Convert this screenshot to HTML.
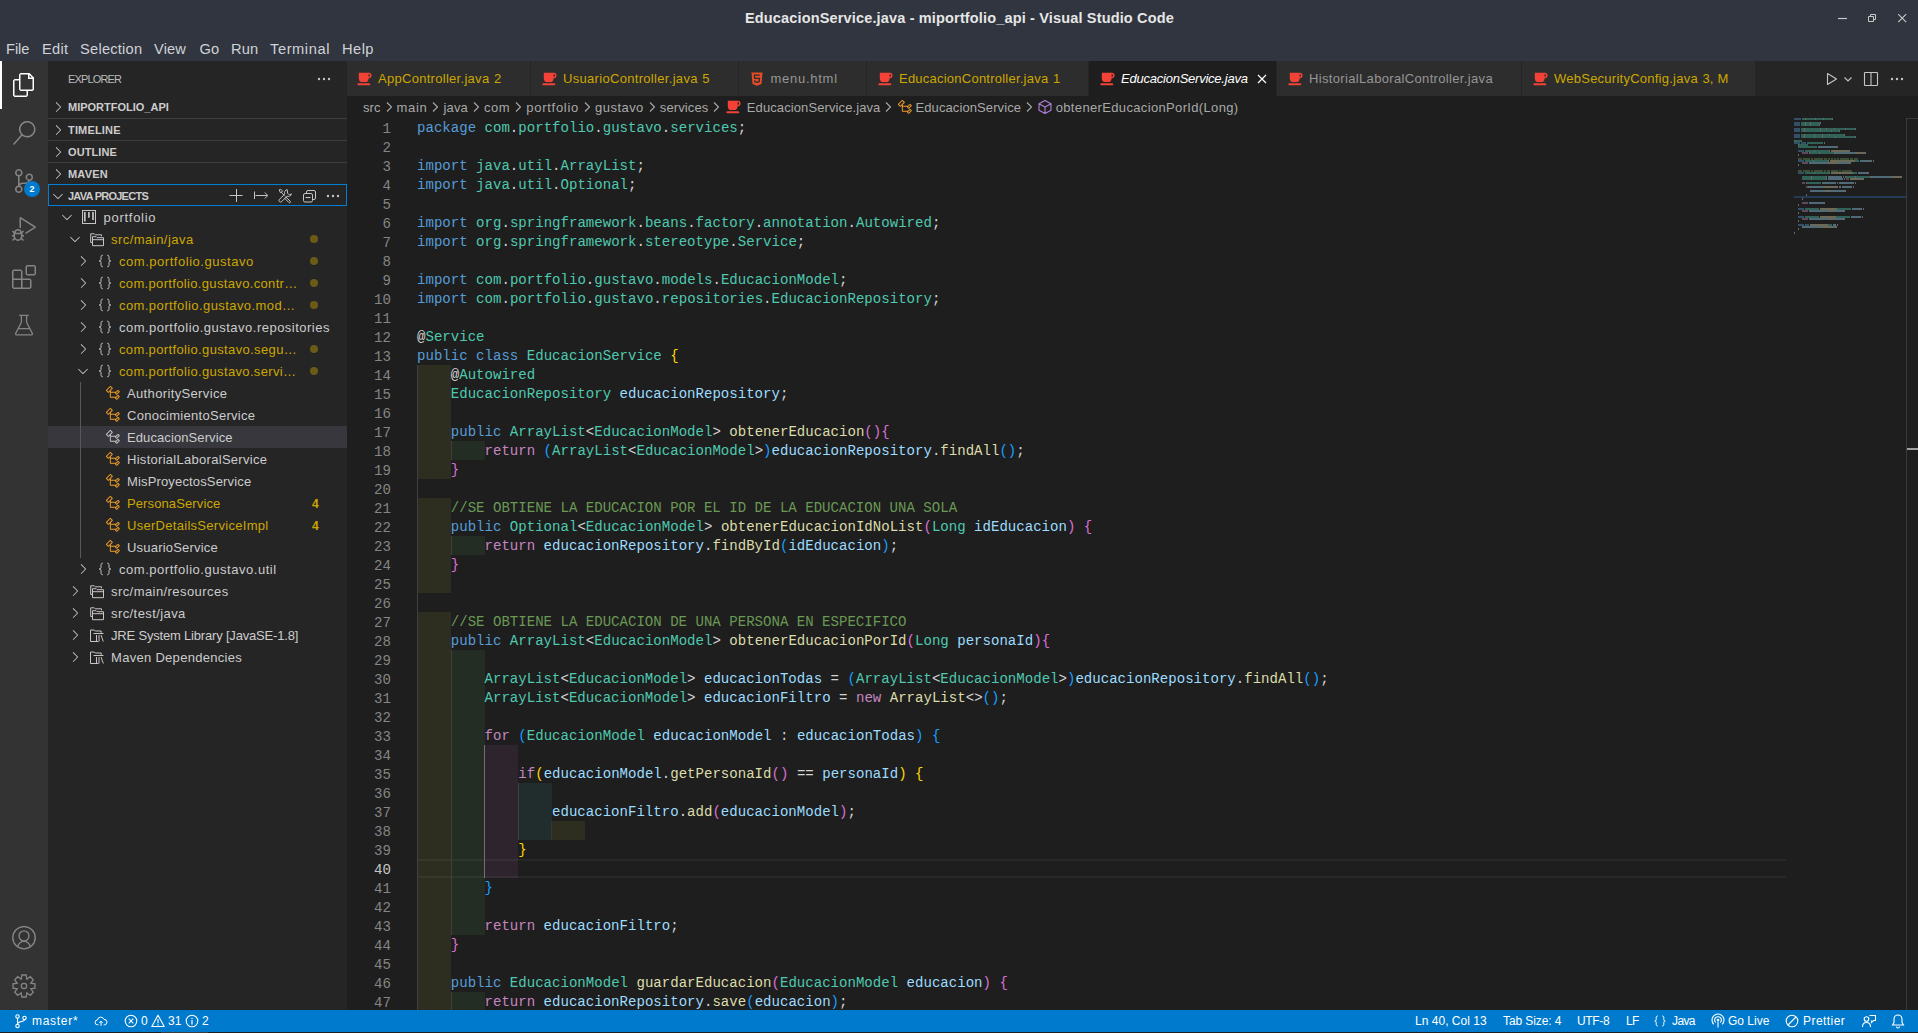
<!DOCTYPE html><html><head><meta charset="utf-8"><title>VS Code</title><style>
*{margin:0;padding:0;box-sizing:border-box}
html,body{width:1918px;height:1033px;overflow:hidden;background:#1e1e1e}
body{position:relative;font-family:"Liberation Sans",sans-serif;color:#cccccc}
.a{position:absolute}
.nw{white-space:pre}
.code{font-family:"Liberation Mono",monospace;font-size:14.07px;line-height:19px;white-space:pre}
</style></head><body><div class="a" style="left:0px;top:0px;width:1918px;height:61px;background:#31353f;"></div><div class="a nw" style="left:745px;top:6.98px;font-size:14.5px;line-height:22px;color:#e6e6e6;font-weight:bold;"><span style="letter-spacing:0.157px">EducacionService.java - miportfolio_api - Visual Studio Code</span></div><svg class="a" style="left:1836px;top:12px;" width="12" height="12" viewBox="0 0 12 12"><path d="M2 6.5h9" stroke="#c8c8c8" stroke-width="1.2"/></svg><svg class="a" style="left:1866px;top:12px;" width="12" height="12" viewBox="0 0 12 12"><path d="M2.5 4.5h5v5h-5z M4.5 4.5v-2h5v5h-2" fill="none" stroke="#c8c8c8" stroke-width="1"/></svg><svg class="a" style="left:1896px;top:12px;" width="12" height="12" viewBox="0 0 12 12"><path d="M2.2 2.2l8 8M10.2 2.2l-8 8" stroke="#c8c8c8" stroke-width="1.1"/></svg><div class="a nw" style="left:6px;top:37.92px;font-size:14.67px;line-height:22px;color:#cfd2d6;"><span style="letter-spacing:-0.043px">File</span></div><div class="a nw" style="left:42px;top:37.92px;font-size:14.67px;line-height:22px;color:#cfd2d6;"><span style="letter-spacing:0.246px">Edit</span></div><div class="a nw" style="left:80px;top:37.92px;font-size:14.67px;line-height:22px;color:#cfd2d6;"><span style="letter-spacing:0.231px">Selection</span></div><div class="a nw" style="left:154px;top:37.92px;font-size:14.67px;line-height:22px;color:#cfd2d6;"><span style="letter-spacing:0.141px">View</span></div><div class="a nw" style="left:199.5px;top:37.92px;font-size:14.67px;line-height:22px;color:#cfd2d6;"><span style="letter-spacing:-0.016px">Go</span></div><div class="a nw" style="left:231px;top:37.92px;font-size:14.67px;line-height:22px;color:#cfd2d6;"><span style="letter-spacing:0.115px">Run</span></div><div class="a nw" style="left:270px;top:37.92px;font-size:14.67px;line-height:22px;color:#cfd2d6;"><span style="letter-spacing:0.576px">Terminal</span></div><div class="a nw" style="left:342px;top:37.92px;font-size:14.67px;line-height:22px;color:#cfd2d6;"><span style="letter-spacing:0.445px">Help</span></div><div class="a" style="left:0px;top:61px;width:48px;height:949px;background:#333333;"></div><div class="a" style="left:0px;top:61px;width:2px;height:48px;background:#ffffff;"></div><svg class="a" style="left:12px;top:73px;" width="24" height="24" viewBox="0 0 24 24"><path fill="#ffffff" d="M17.5 0h-9L7 1.5V6H2.5L1 7.5v15.07L2.5 24h12.07L16 22.57V18h4.7l1.3-1.43V4.5L17.5 0zm0 2.12l2.38 2.38H17.5V2.12zm-3 20.38h-12v-15H7v9.07L8.5 18h6v4.5zm6-6h-12v-15H16V6h4.5v10.5z"/></svg><svg class="a" style="left:12px;top:121px;" width="24" height="24" viewBox="0 0 24 24"><path fill="#858585" d="M15.25 0a8.25 8.25 0 0 0-6.18 13.72L1 22.88l1.12 1 8.05-9.12A8.251 8.251 0 1 0 15.25.01V0zm0 15a6.75 6.75 0 1 1 0-13.5 6.75 6.75 0 0 1 0 13.5z"/></svg><svg class="a" style="left:12px;top:169px;" width="24" height="24" viewBox="0 0 24 24"><path fill="#858585" d="M21.007 8.222A3.738 3.738 0 0 0 15.045 5.2a3.737 3.737 0 0 0 1.156 6.583 2.988 2.988 0 0 1-2.668 1.67h-2.99a4.456 4.456 0 0 0-2.989 1.165V7.4a3.737 3.737 0 1 0-1.494 0v9.117a3.776 3.776 0 1 0 1.816.099 2.99 2.99 0 0 1 2.668-1.667h2.99a4.484 4.484 0 0 0 4.223-3.039 3.736 3.736 0 0 0 3.25-3.687zM4.565 3.738a2.242 2.242 0 1 1 4.484 0 2.242 2.242 0 0 1-4.484 0zm4.484 16.441a2.242 2.242 0 1 1-4.484 0 2.242 2.242 0 0 1 4.484 0zm8.221-9.715a2.242 2.242 0 1 1 0-4.485 2.242 2.242 0 0 1 0 4.485z"/></svg><svg class="a" style="left:24px;top:181px;" width="16" height="16" viewBox="0 0 16 16"><circle cx="8" cy="8" r="8" fill="#007acc"/></svg><div class="a" style="left:24px;top:181px;width:16px;height:16px;text-align:center;font-size:9px;line-height:16px;font-weight:bold;color:#fff">2</div><svg class="a" style="left:12px;top:217px;" width="24" height="24" viewBox="0 0 24 24"><path fill="#858585" d="M10.94 13.5l-1.32 1.32a3.73 3.73 0 0 0-7.24 0L1.06 13.5 0 14.56l1.72 1.72-.22.22V18H0v1.5h1.5v.08c.077.489.214.966.41 1.42L0 22.94 1.06 24l1.65-1.65A4.308 4.308 0 0 0 6 24a4.31 4.31 0 0 0 3.29-1.65L10.94 24 12 22.94 10.09 21c.198-.464.336-.951.41-1.45v-.1H12V18h-1.5v-1.5l-.22-.22L12 14.56l-1.06-1.06zM6 13.5a2.25 2.25 0 0 1 2.25 2.25h-4.5A2.25 2.25 0 0 1 6 13.5zm3 6a3.33 3.33 0 0 1-3 3 3.33 3.33 0 0 1-3-3v-2.25h6v2.25zm14.76-9.9v1.26L13.5 17.37V15.6l8.5-5.37L9 2v9.46a5.07 5.07 0 0 0-1.5-.72V.63L8.64 0l15.12 9.6z"/></svg><svg class="a" style="left:12px;top:265px;" width="24" height="24" viewBox="0 0 24 24"><path fill="#858585" d="M13.5 1.5L15 0h7.5L24 1.5V9l-1.5 1.5H15L13.5 9V1.5zm1.5 0V9h7.5V1.5H15zM0 15V6l1.5-1.5H9L10.5 6v7.5H18l1.5 1.5v7.5L18 24H1.5L0 22.5V15zm9-1.5V6H1.5v7.5H9zM9 15H1.5v7.5H9V15zm1.5 7.5H18V15h-7.5v7.5z"/></svg><svg class="a" style="left:12px;top:313px;" width="24" height="24" viewBox="0 0 24 24"><path d="M7.2 2.4h9.6M9.4 2.4v6.8L3.6 20.6a.9.9 0 0 0 .8 1.3h15.2a.9.9 0 0 0 .8-1.3L14.6 9.2V2.4M6.6 15.6h10.8" fill="none" stroke="#858585" stroke-width="1.3" stroke-linejoin="round"/></svg><svg class="a" style="left:12px;top:926px;" width="24" height="24" viewBox="0 0 24 24"><circle cx="12" cy="11.7" r="11.2" fill="none" stroke="#858585" stroke-width="1.4"/><circle cx="12" cy="9.9" r="5" fill="none" stroke="#858585" stroke-width="1.4"/><path d="M5.6 20.6c1.1-3.3 3.5-5.2 6.4-5.2s5.3 1.9 6.4 5.2" fill="none" stroke="#858585" stroke-width="1.4"/></svg><svg class="a" style="left:12px;top:974px;" width="24" height="24" viewBox="0 0 24 24"><path d="M9.17 5.16 L9.86 1.01 L14.14 1.01 L14.83 5.16 L18.26 2.71 L21.29 5.74 L18.84 9.17 L22.99 9.86 L22.99 14.14 L18.84 14.83 L21.29 18.26 L18.26 21.29 L14.83 18.84 L14.14 22.99 L9.86 22.99 L9.17 18.84 L5.74 21.29 L2.71 18.26 L5.16 14.83 L1.01 14.14 L1.01 9.86 L5.16 9.17 L2.71 5.74 L5.74 2.71Z" fill="none" stroke="#858585" stroke-width="1.3" stroke-linejoin="miter"/><circle cx="12" cy="12" r="2.7" fill="none" stroke="#858585" stroke-width="1.2"/></svg><div class="a" style="left:48px;top:61px;width:299px;height:949px;background:#252526;"></div><div class="a nw" style="left:68px;top:71.19px;font-size:11px;line-height:16px;color:#bbbbbb;"><span style="letter-spacing:-0.848px">EXPLORER</span></div><svg class="a" style="left:316px;top:71px;" width="16" height="16" viewBox="0 0 16 16"><circle cx="3" cy="8" r="1.2" fill="#c5c5c5"/><circle cx="8" cy="8" r="1.2" fill="#c5c5c5"/><circle cx="13" cy="8" r="1.2" fill="#c5c5c5"/></svg><svg class="a" style="left:50px;top:99px;" width="16" height="16" viewBox="0 0 16 16"><path fill="#c5c5c5" d="M10.072 8.024L5.715 3.667l.618-.62L11 7.716v.618L6.333 13l-.618-.619 4.357-4.357z"/></svg><div class="a nw" style="left:68px;top:99.19px;font-size:11px;line-height:16px;color:#cccccc;font-weight:bold;"><span style="letter-spacing:-0.001px">MIPORTFOLIO_API</span></div><div class="a" style="left:48px;top:118px;width:299px;height:1px;background:#3c3c3c;"></div><svg class="a" style="left:50px;top:122px;" width="16" height="16" viewBox="0 0 16 16"><path fill="#c5c5c5" d="M10.072 8.024L5.715 3.667l.618-.62L11 7.716v.618L6.333 13l-.618-.619 4.357-4.357z"/></svg><div class="a nw" style="left:68px;top:122.19px;font-size:11px;line-height:16px;color:#cccccc;font-weight:bold;"><span style="letter-spacing:0.168px">TIMELINE</span></div><div class="a" style="left:48px;top:140px;width:299px;height:1px;background:#3c3c3c;"></div><svg class="a" style="left:50px;top:144px;" width="16" height="16" viewBox="0 0 16 16"><path fill="#c5c5c5" d="M10.072 8.024L5.715 3.667l.618-.62L11 7.716v.618L6.333 13l-.618-.619 4.357-4.357z"/></svg><div class="a nw" style="left:68px;top:144.19px;font-size:11px;line-height:16px;color:#cccccc;font-weight:bold;"><span style="letter-spacing:0.087px">OUTLINE</span></div><div class="a" style="left:48px;top:162px;width:299px;height:1px;background:#3c3c3c;"></div><svg class="a" style="left:50px;top:166px;" width="16" height="16" viewBox="0 0 16 16"><path fill="#c5c5c5" d="M10.072 8.024L5.715 3.667l.618-.62L11 7.716v.618L6.333 13l-.618-.619 4.357-4.357z"/></svg><div class="a nw" style="left:68px;top:166.19px;font-size:11px;line-height:16px;color:#cccccc;font-weight:bold;"><span style="letter-spacing:0.178px">MAVEN</span></div><div class="a" style="left:48px;top:184px;width:299px;height:22px;border:1px solid #007fd4"></div><svg class="a" style="left:50px;top:188px;" width="16" height="16" viewBox="0 0 16 16"><path fill="#c5c5c5" d="M7.976 10.072l4.357-4.357.62.618L8.284 11h-.618L3 6.333l.619-.618 4.357 4.357z"/></svg><div class="a nw" style="left:68px;top:188.19px;font-size:11px;line-height:16px;color:#cccccc;font-weight:bold;"><span style="letter-spacing:-0.744px">JAVA PROJECTS</span></div><svg class="a" style="left:229px;top:188px;" width="16" height="16" viewBox="0 0 16 16"><path d="M7.5 1v13M0.5 7.5h13" stroke="#c5c5c5" stroke-width="1"/></svg><svg class="a" style="left:252px;top:188px;" width="16" height="16" viewBox="0 0 16 16"><path d="M2.5 3.5v7.5M3.5 7.5h12M12.8 4.5l3 3-3 3" fill="none" stroke="#c5c5c5" stroke-width="1"/></svg><svg class="a" style="left:277px;top:188px;" width="16" height="16" viewBox="0 0 16 16"><path d="M2.2 1.8l1.6-.5 1.5 1.5-.5 1.6-1.5.1zM4.2 4.3l3.4 3.4M8.6 8.6l4.6 4.6a.9.9 0 0 1-1.3 1.3L7.3 9.9" fill="none" stroke="#c5c5c5" stroke-width="1"/><path d="M10.2 1.6a3.2 3.2 0 0 0-2.4 4.4L2.2 11.6a1.6 1.6 0 0 0 2.2 2.2l5.6-5.6a3.2 3.2 0 0 0 4.4-2.4l-2 1.2-1.8-1.8z" fill="none" stroke="#c5c5c5" stroke-width="1" stroke-linejoin="round"/></svg><svg class="a" style="left:302px;top:188px;" width="16" height="16" viewBox="0 0 16 16"><rect x="4.5" y="2.5" width="9" height="9" rx="1.5" fill="none" stroke="#c5c5c5" stroke-width="1"/><rect x="1.5" y="5.5" width="9" height="8.5" rx="1.5" fill="#252526" stroke="#c5c5c5" stroke-width="1"/><path d="M3.5 9.5h5" stroke="#c5c5c5" stroke-width="1.1"/></svg><svg class="a" style="left:325px;top:188px;" width="16" height="16" viewBox="0 0 16 16"><circle cx="3" cy="8" r="1.2" fill="#c5c5c5"/><circle cx="8" cy="8" r="1.2" fill="#c5c5c5"/><circle cx="13" cy="8" r="1.2" fill="#c5c5c5"/></svg><svg class="a" style="left:59px;top:209px;" width="16" height="16" viewBox="0 0 16 16"><path fill="#c5c5c5" d="M7.976 10.072l4.357-4.357.62.618L8.284 11h-.618L3 6.333l.619-.618 4.357 4.357z"/></svg><svg class="a" style="left:81px;top:209px;" width="16" height="16" viewBox="0 0 16 16"><rect x="1.5" y="1.5" width="13" height="13" fill="none" stroke="#c5c5c5" stroke-width="1"/><path d="M3.8 3v9.5M7.9 3v5.8M12 3v8" stroke="#c5c5c5" stroke-width="1.7"/></svg><div class="a nw" style="left:103.5px;top:208.10px;font-size:13px;line-height:20px;color:#cccccc;"><span style="letter-spacing:0.729px">portfolio</span></div><svg class="a" style="left:67px;top:231px;" width="16" height="16" viewBox="0 0 16 16"><path fill="#c5c5c5" d="M7.976 10.072l4.357-4.357.62.618L8.284 11h-.618L3 6.333l.619-.618 4.357 4.357z"/></svg><svg class="a" style="left:89px;top:231px;" width="16" height="16" viewBox="0 0 16 16"><path d="M3 11.5H1.7V2.8h3.6l1 1h6.2v1.5" fill="none" stroke="#c5c5c5" stroke-width="1"/><path d="M3.5 5.7h3.7l1 1h6.3v8H3.5z M3.5 8.7h11" fill="none" stroke="#c5c5c5" stroke-width="1"/></svg><div class="a nw" style="left:111px;top:230.10px;font-size:13px;line-height:20px;color:#cca700;"><span style="letter-spacing:0.468px">src/main/java</span></div><svg class="a" style="left:310px;top:235px;" width="8" height="8" viewBox="0 0 8 8"><circle cx="4" cy="4" r="4" fill="rgba(204,167,0,0.42)"/></svg><svg class="a" style="left:75px;top:253px;" width="16" height="16" viewBox="0 0 16 16"><path fill="#c5c5c5" d="M10.072 8.024L5.715 3.667l.618-.62L11 7.716v.618L6.333 13l-.618-.619 4.357-4.357z"/></svg><svg class="a" style="left:97px;top:253px;" width="16" height="16" viewBox="0 0 16 16"><path d="M5.8 2.2C4.4 2.2 4 2.9 4 4.2v2.2C4 7.4 3.5 8 2.2 8 3.5 8 4 8.6 4 9.6v2.2c0 1.3.4 2 1.8 2M10.2 2.2c1.4 0 1.8.7 1.8 2v2.2c0 1 .5 1.6 1.8 1.6-1.3 0-1.8.6-1.8 1.6v2.2c0 1.3-.4 2-1.8 2" fill="none" stroke="#c5c5c5" stroke-width="1"/></svg><div class="a nw" style="left:119px;top:252.10px;font-size:13px;line-height:20px;color:#cca700;"><span style="letter-spacing:0.532px">com.portfolio.gustavo</span></div><svg class="a" style="left:310px;top:257px;" width="8" height="8" viewBox="0 0 8 8"><circle cx="4" cy="4" r="4" fill="rgba(204,167,0,0.42)"/></svg><svg class="a" style="left:75px;top:275px;" width="16" height="16" viewBox="0 0 16 16"><path fill="#c5c5c5" d="M10.072 8.024L5.715 3.667l.618-.62L11 7.716v.618L6.333 13l-.618-.619 4.357-4.357z"/></svg><svg class="a" style="left:97px;top:275px;" width="16" height="16" viewBox="0 0 16 16"><path d="M5.8 2.2C4.4 2.2 4 2.9 4 4.2v2.2C4 7.4 3.5 8 2.2 8 3.5 8 4 8.6 4 9.6v2.2c0 1.3.4 2 1.8 2M10.2 2.2c1.4 0 1.8.7 1.8 2v2.2c0 1 .5 1.6 1.8 1.6-1.3 0-1.8.6-1.8 1.6v2.2c0 1.3-.4 2-1.8 2" fill="none" stroke="#c5c5c5" stroke-width="1"/></svg><div class="a nw" style="left:119px;top:274.10px;font-size:13px;line-height:20px;color:#cca700;"><span style="letter-spacing:0.340px">com.portfolio.gustavo.contr…</span></div><svg class="a" style="left:310px;top:279px;" width="8" height="8" viewBox="0 0 8 8"><circle cx="4" cy="4" r="4" fill="rgba(204,167,0,0.42)"/></svg><svg class="a" style="left:75px;top:297px;" width="16" height="16" viewBox="0 0 16 16"><path fill="#c5c5c5" d="M10.072 8.024L5.715 3.667l.618-.62L11 7.716v.618L6.333 13l-.618-.619 4.357-4.357z"/></svg><svg class="a" style="left:97px;top:297px;" width="16" height="16" viewBox="0 0 16 16"><path d="M5.8 2.2C4.4 2.2 4 2.9 4 4.2v2.2C4 7.4 3.5 8 2.2 8 3.5 8 4 8.6 4 9.6v2.2c0 1.3.4 2 1.8 2M10.2 2.2c1.4 0 1.8.7 1.8 2v2.2c0 1 .5 1.6 1.8 1.6-1.3 0-1.8.6-1.8 1.6v2.2c0 1.3-.4 2-1.8 2" fill="none" stroke="#c5c5c5" stroke-width="1"/></svg><div class="a nw" style="left:119px;top:296.10px;font-size:13px;line-height:20px;color:#cca700;"><span style="letter-spacing:0.425px">com.portfolio.gustavo.mod…</span></div><svg class="a" style="left:310px;top:301px;" width="8" height="8" viewBox="0 0 8 8"><circle cx="4" cy="4" r="4" fill="rgba(204,167,0,0.42)"/></svg><svg class="a" style="left:75px;top:319px;" width="16" height="16" viewBox="0 0 16 16"><path fill="#c5c5c5" d="M10.072 8.024L5.715 3.667l.618-.62L11 7.716v.618L6.333 13l-.618-.619 4.357-4.357z"/></svg><svg class="a" style="left:97px;top:319px;" width="16" height="16" viewBox="0 0 16 16"><path d="M5.8 2.2C4.4 2.2 4 2.9 4 4.2v2.2C4 7.4 3.5 8 2.2 8 3.5 8 4 8.6 4 9.6v2.2c0 1.3.4 2 1.8 2M10.2 2.2c1.4 0 1.8.7 1.8 2v2.2c0 1 .5 1.6 1.8 1.6-1.3 0-1.8.6-1.8 1.6v2.2c0 1.3-.4 2-1.8 2" fill="none" stroke="#c5c5c5" stroke-width="1"/></svg><div class="a nw" style="left:119px;top:318.10px;font-size:13px;line-height:20px;color:#cccccc;"><span style="letter-spacing:0.487px">com.portfolio.gustavo.repositories</span></div><svg class="a" style="left:75px;top:341px;" width="16" height="16" viewBox="0 0 16 16"><path fill="#c5c5c5" d="M10.072 8.024L5.715 3.667l.618-.62L11 7.716v.618L6.333 13l-.618-.619 4.357-4.357z"/></svg><svg class="a" style="left:97px;top:341px;" width="16" height="16" viewBox="0 0 16 16"><path d="M5.8 2.2C4.4 2.2 4 2.9 4 4.2v2.2C4 7.4 3.5 8 2.2 8 3.5 8 4 8.6 4 9.6v2.2c0 1.3.4 2 1.8 2M10.2 2.2c1.4 0 1.8.7 1.8 2v2.2c0 1 .5 1.6 1.8 1.6-1.3 0-1.8.6-1.8 1.6v2.2c0 1.3-.4 2-1.8 2" fill="none" stroke="#c5c5c5" stroke-width="1"/></svg><div class="a nw" style="left:119px;top:340.10px;font-size:13px;line-height:20px;color:#cca700;"><span style="letter-spacing:0.360px">com.portfolio.gustavo.segu…</span></div><svg class="a" style="left:310px;top:345px;" width="8" height="8" viewBox="0 0 8 8"><circle cx="4" cy="4" r="4" fill="rgba(204,167,0,0.42)"/></svg><svg class="a" style="left:75px;top:363px;" width="16" height="16" viewBox="0 0 16 16"><path fill="#c5c5c5" d="M7.976 10.072l4.357-4.357.62.618L8.284 11h-.618L3 6.333l.619-.618 4.357 4.357z"/></svg><svg class="a" style="left:97px;top:363px;" width="16" height="16" viewBox="0 0 16 16"><path d="M5.8 2.2C4.4 2.2 4 2.9 4 4.2v2.2C4 7.4 3.5 8 2.2 8 3.5 8 4 8.6 4 9.6v2.2c0 1.3.4 2 1.8 2M10.2 2.2c1.4 0 1.8.7 1.8 2v2.2c0 1 .5 1.6 1.8 1.6-1.3 0-1.8.6-1.8 1.6v2.2c0 1.3-.4 2-1.8 2" fill="none" stroke="#c5c5c5" stroke-width="1"/></svg><div class="a nw" style="left:119px;top:362.10px;font-size:13px;line-height:20px;color:#cca700;"><span style="letter-spacing:0.349px">com.portfolio.gustavo.servi…</span></div><svg class="a" style="left:310px;top:367px;" width="8" height="8" viewBox="0 0 8 8"><circle cx="4" cy="4" r="4" fill="rgba(204,167,0,0.42)"/></svg><svg class="a" style="left:105px;top:385px;" width="16" height="16" viewBox="0 0 16 16"><path fill="#ee9d28" d="M11.34 9.71h.71l2.67-2.67v-.71L13.38 5h-.7l-1.82 1.81h-5V5.56l1.86-1.85V3l-2-2H5L1 5v.71l2 2h.71l1.14-1.15v5.79l.5.5H10v.52l1.33 1.34h.71l2.67-2.67v-.71L13.37 10h-.7l-1.86 1.85h-5v-4H10v.48l1.34 1.38zm1.69-3.65l.63.63-2 2-.63-.63 2-2zm0 5l.63.63-2 2-.63-.63 2-2zM3.35 6.65L2.06 5.36l3.29-3.29 1.29 1.29-3.29 3.29z"/></svg><div class="a nw" style="left:127px;top:384.10px;font-size:13px;line-height:20px;color:#cccccc;"><span style="letter-spacing:0.354px">AuthorityService</span></div><svg class="a" style="left:105px;top:407px;" width="16" height="16" viewBox="0 0 16 16"><path fill="#ee9d28" d="M11.34 9.71h.71l2.67-2.67v-.71L13.38 5h-.7l-1.82 1.81h-5V5.56l1.86-1.85V3l-2-2H5L1 5v.71l2 2h.71l1.14-1.15v5.79l.5.5H10v.52l1.33 1.34h.71l2.67-2.67v-.71L13.37 10h-.7l-1.86 1.85h-5v-4H10v.48l1.34 1.38zm1.69-3.65l.63.63-2 2-.63-.63 2-2zm0 5l.63.63-2 2-.63-.63 2-2zM3.35 6.65L2.06 5.36l3.29-3.29 1.29 1.29-3.29 3.29z"/></svg><div class="a nw" style="left:127px;top:406.10px;font-size:13px;line-height:20px;color:#cccccc;"><span style="letter-spacing:0.289px">ConocimientoService</span></div><div class="a" style="left:48px;top:426px;width:299px;height:22px;background:#37373d;"></div><svg class="a" style="left:105px;top:429px;" width="16" height="16" viewBox="0 0 16 16"><path fill="#c5c5c5" d="M11.34 9.71h.71l2.67-2.67v-.71L13.38 5h-.7l-1.82 1.81h-5V5.56l1.86-1.85V3l-2-2H5L1 5v.71l2 2h.71l1.14-1.15v5.79l.5.5H10v.52l1.33 1.34h.71l2.67-2.67v-.71L13.37 10h-.7l-1.86 1.85h-5v-4H10v.48l1.34 1.38zm1.69-3.65l.63.63-2 2-.63-.63 2-2zm0 5l.63.63-2 2-.63-.63 2-2zM3.35 6.65L2.06 5.36l3.29-3.29 1.29 1.29-3.29 3.29z"/></svg><div class="a nw" style="left:127px;top:428.10px;font-size:13px;line-height:20px;color:#cccccc;"><span style="letter-spacing:0.098px">EducacionService</span></div><svg class="a" style="left:105px;top:451px;" width="16" height="16" viewBox="0 0 16 16"><path fill="#ee9d28" d="M11.34 9.71h.71l2.67-2.67v-.71L13.38 5h-.7l-1.82 1.81h-5V5.56l1.86-1.85V3l-2-2H5L1 5v.71l2 2h.71l1.14-1.15v5.79l.5.5H10v.52l1.33 1.34h.71l2.67-2.67v-.71L13.37 10h-.7l-1.86 1.85h-5v-4H10v.48l1.34 1.38zm1.69-3.65l.63.63-2 2-.63-.63 2-2zm0 5l.63.63-2 2-.63-.63 2-2zM3.35 6.65L2.06 5.36l3.29-3.29 1.29 1.29-3.29 3.29z"/></svg><div class="a nw" style="left:127px;top:450.10px;font-size:13px;line-height:20px;color:#cccccc;"><span style="letter-spacing:0.285px">HistorialLaboralService</span></div><svg class="a" style="left:105px;top:473px;" width="16" height="16" viewBox="0 0 16 16"><path fill="#ee9d28" d="M11.34 9.71h.71l2.67-2.67v-.71L13.38 5h-.7l-1.82 1.81h-5V5.56l1.86-1.85V3l-2-2H5L1 5v.71l2 2h.71l1.14-1.15v5.79l.5.5H10v.52l1.33 1.34h.71l2.67-2.67v-.71L13.37 10h-.7l-1.86 1.85h-5v-4H10v.48l1.34 1.38zm1.69-3.65l.63.63-2 2-.63-.63 2-2zm0 5l.63.63-2 2-.63-.63 2-2zM3.35 6.65L2.06 5.36l3.29-3.29 1.29 1.29-3.29 3.29z"/></svg><div class="a nw" style="left:127px;top:472.10px;font-size:13px;line-height:20px;color:#cccccc;"><span style="letter-spacing:0.153px">MisProyectosService</span></div><svg class="a" style="left:105px;top:495px;" width="16" height="16" viewBox="0 0 16 16"><path fill="#ee9d28" d="M11.34 9.71h.71l2.67-2.67v-.71L13.38 5h-.7l-1.82 1.81h-5V5.56l1.86-1.85V3l-2-2H5L1 5v.71l2 2h.71l1.14-1.15v5.79l.5.5H10v.52l1.33 1.34h.71l2.67-2.67v-.71L13.37 10h-.7l-1.86 1.85h-5v-4H10v.48l1.34 1.38zm1.69-3.65l.63.63-2 2-.63-.63 2-2zm0 5l.63.63-2 2-.63-.63 2-2zM3.35 6.65L2.06 5.36l3.29-3.29 1.29 1.29-3.29 3.29z"/></svg><div class="a nw" style="left:127px;top:494.10px;font-size:13px;line-height:20px;color:#cca700;"><span style="letter-spacing:0.112px">PersonaService</span></div><div class="a nw" style="left:312px;top:495.44px;font-size:12px;line-height:18px;color:#cca700;font-weight:bold;"><span style="letter-spacing:0.188px">4</span></div><svg class="a" style="left:105px;top:517px;" width="16" height="16" viewBox="0 0 16 16"><path fill="#ee9d28" d="M11.34 9.71h.71l2.67-2.67v-.71L13.38 5h-.7l-1.82 1.81h-5V5.56l1.86-1.85V3l-2-2H5L1 5v.71l2 2h.71l1.14-1.15v5.79l.5.5H10v.52l1.33 1.34h.71l2.67-2.67v-.71L13.37 10h-.7l-1.86 1.85h-5v-4H10v.48l1.34 1.38zm1.69-3.65l.63.63-2 2-.63-.63 2-2zm0 5l.63.63-2 2-.63-.63 2-2zM3.35 6.65L2.06 5.36l3.29-3.29 1.29 1.29-3.29 3.29z"/></svg><div class="a nw" style="left:127px;top:516.10px;font-size:13px;line-height:20px;color:#cca700;"><span style="letter-spacing:0.289px">UserDetailsServiceImpl</span></div><div class="a nw" style="left:312px;top:517.44px;font-size:12px;line-height:18px;color:#cca700;font-weight:bold;"><span style="letter-spacing:0.188px">4</span></div><svg class="a" style="left:105px;top:539px;" width="16" height="16" viewBox="0 0 16 16"><path fill="#ee9d28" d="M11.34 9.71h.71l2.67-2.67v-.71L13.38 5h-.7l-1.82 1.81h-5V5.56l1.86-1.85V3l-2-2H5L1 5v.71l2 2h.71l1.14-1.15v5.79l.5.5H10v.52l1.33 1.34h.71l2.67-2.67v-.71L13.37 10h-.7l-1.86 1.85h-5v-4H10v.48l1.34 1.38zm1.69-3.65l.63.63-2 2-.63-.63 2-2zm0 5l.63.63-2 2-.63-.63 2-2zM3.35 6.65L2.06 5.36l3.29-3.29 1.29 1.29-3.29 3.29z"/></svg><div class="a nw" style="left:127px;top:538.10px;font-size:13px;line-height:20px;color:#cccccc;"><span style="letter-spacing:0.204px">UsuarioService</span></div><svg class="a" style="left:75px;top:561px;" width="16" height="16" viewBox="0 0 16 16"><path fill="#c5c5c5" d="M10.072 8.024L5.715 3.667l.618-.62L11 7.716v.618L6.333 13l-.618-.619 4.357-4.357z"/></svg><svg class="a" style="left:97px;top:561px;" width="16" height="16" viewBox="0 0 16 16"><path d="M5.8 2.2C4.4 2.2 4 2.9 4 4.2v2.2C4 7.4 3.5 8 2.2 8 3.5 8 4 8.6 4 9.6v2.2c0 1.3.4 2 1.8 2M10.2 2.2c1.4 0 1.8.7 1.8 2v2.2c0 1 .5 1.6 1.8 1.6-1.3 0-1.8.6-1.8 1.6v2.2c0 1.3-.4 2-1.8 2" fill="none" stroke="#c5c5c5" stroke-width="1"/></svg><div class="a nw" style="left:119px;top:560.10px;font-size:13px;line-height:20px;color:#cccccc;"><span style="letter-spacing:0.533px">com.portfolio.gustavo.util</span></div><svg class="a" style="left:67px;top:583px;" width="16" height="16" viewBox="0 0 16 16"><path fill="#c5c5c5" d="M10.072 8.024L5.715 3.667l.618-.62L11 7.716v.618L6.333 13l-.618-.619 4.357-4.357z"/></svg><svg class="a" style="left:89px;top:583px;" width="16" height="16" viewBox="0 0 16 16"><path d="M3 11.5H1.7V2.8h3.6l1 1h6.2v1.5" fill="none" stroke="#c5c5c5" stroke-width="1"/><path d="M3.5 5.7h3.7l1 1h6.3v8H3.5z M3.5 8.7h11" fill="none" stroke="#c5c5c5" stroke-width="1"/></svg><div class="a nw" style="left:111px;top:582.10px;font-size:13px;line-height:20px;color:#cccccc;"><span style="letter-spacing:0.431px">src/main/resources</span></div><svg class="a" style="left:67px;top:605px;" width="16" height="16" viewBox="0 0 16 16"><path fill="#c5c5c5" d="M10.072 8.024L5.715 3.667l.618-.62L11 7.716v.618L6.333 13l-.618-.619 4.357-4.357z"/></svg><svg class="a" style="left:89px;top:605px;" width="16" height="16" viewBox="0 0 16 16"><path d="M3 11.5H1.7V2.8h3.6l1 1h6.2v1.5" fill="none" stroke="#c5c5c5" stroke-width="1"/><path d="M3.5 5.7h3.7l1 1h6.3v8H3.5z M3.5 8.7h11" fill="none" stroke="#c5c5c5" stroke-width="1"/></svg><div class="a nw" style="left:111px;top:604.10px;font-size:13px;line-height:20px;color:#cccccc;"><span style="letter-spacing:0.416px">src/test/java</span></div><svg class="a" style="left:67px;top:627px;" width="16" height="16" viewBox="0 0 16 16"><path fill="#c5c5c5" d="M10.072 8.024L5.715 3.667l.618-.62L11 7.716v.618L6.333 13l-.618-.619 4.357-4.357z"/></svg><svg class="a" style="left:89px;top:627px;" width="16" height="16" viewBox="0 0 16 16"><path d="M1.5 3v11.5h8M1.5 3h3.7l1 1h6v1.8M4.5 6.5h10M7.5 8v6.5M10 8v6.5M12 8l2.3 6.5" fill="none" stroke="#c5c5c5" stroke-width="1"/></svg><div class="a nw" style="left:111px;top:626.10px;font-size:13px;line-height:20px;color:#cccccc;"><span style="letter-spacing:-0.186px">JRE System Library [JavaSE-1.8]</span></div><svg class="a" style="left:67px;top:649px;" width="16" height="16" viewBox="0 0 16 16"><path fill="#c5c5c5" d="M10.072 8.024L5.715 3.667l.618-.62L11 7.716v.618L6.333 13l-.618-.619 4.357-4.357z"/></svg><svg class="a" style="left:89px;top:649px;" width="16" height="16" viewBox="0 0 16 16"><path d="M1.5 3v11.5h8M1.5 3h3.7l1 1h6v1.8M4.5 6.5h10M7.5 8v6.5M10 8v6.5M12 8l2.3 6.5" fill="none" stroke="#c5c5c5" stroke-width="1"/></svg><div class="a nw" style="left:111px;top:648.10px;font-size:13px;line-height:20px;color:#cccccc;"><span style="letter-spacing:0.296px">Maven Dependencies</span></div><div class="a" style="left:80px;top:382px;width:1px;height:176px;background:#585858;"></div><div class="a" style="left:347px;top:61px;width:1571px;height:35px;background:#252526;"></div><div class="a" style="left:347px;top:61px;width:183px;height:35px;background:#2d2d2d;"></div><svg class="a" style="left:355.7px;top:71px;" width="16" height="16" viewBox="0 0 16 16"><path d="M2.8 1.7h9.8v5.5c0 2.9-1.6 3.9-3.2 3.9H6c-1.6 0-3.2-1-3.2-3.9z" fill="#f44336"/><path d="M12.2 2.5h.6a2 2 0 0 1 0 4h-.6" fill="none" stroke="#f44336" stroke-width="1.5"/><rect x="1.3" y="12.2" width="13" height="2" rx="1" fill="#f44336"/></svg><div class="a nw" style="left:378px;top:69.00px;font-size:13px;line-height:20px;color:#cca700;"><span style="letter-spacing:0.289px">AppController.java</span></div><div class="a nw" style="left:493.96875px;top:69.00px;font-size:13px;line-height:20px;color:#cca700;"><span style="letter-spacing:0.203px">2</span></div><div class="a" style="left:531px;top:61px;width:207px;height:35px;background:#2d2d2d;"></div><svg class="a" style="left:540.7px;top:71px;" width="16" height="16" viewBox="0 0 16 16"><path d="M2.8 1.7h9.8v5.5c0 2.9-1.6 3.9-3.2 3.9H6c-1.6 0-3.2-1-3.2-3.9z" fill="#f44336"/><path d="M12.2 2.5h.6a2 2 0 0 1 0 4h-.6" fill="none" stroke="#f44336" stroke-width="1.5"/><rect x="1.3" y="12.2" width="13" height="2" rx="1" fill="#f44336"/></svg><div class="a nw" style="left:563px;top:69.00px;font-size:13px;line-height:20px;color:#cca700;"><span style="letter-spacing:0.312px">UsuarioController.java</span></div><div class="a nw" style="left:702.3125px;top:69.00px;font-size:13px;line-height:20px;color:#cca700;"><span style="letter-spacing:0.203px">5</span></div><div class="a" style="left:739px;top:61px;width:127px;height:35px;background:#2d2d2d;"></div><svg class="a" style="left:749px;top:71px;" width="16" height="16" viewBox="0 0 16 16"><path d="M2.5 1.5h11l-1 11.5-4.5 1.8-4.5-1.8z" fill="#e44d26"/><path d="M10.8 4.2H5.4l.3 3.2h4.8l-.3 3.3-2.2.7-2.2-.7-.1-1.4" fill="none" stroke="#2d2d2d" stroke-width="1.3"/></svg><div class="a nw" style="left:770.5px;top:69.00px;font-size:13px;line-height:20px;color:#969696;"><span style="letter-spacing:0.729px">menu.html</span></div><div class="a" style="left:867px;top:61px;width:221px;height:35px;background:#2d2d2d;"></div><svg class="a" style="left:876.7px;top:71px;" width="16" height="16" viewBox="0 0 16 16"><path d="M2.8 1.7h9.8v5.5c0 2.9-1.6 3.9-3.2 3.9H6c-1.6 0-3.2-1-3.2-3.9z" fill="#f44336"/><path d="M12.2 2.5h.6a2 2 0 0 1 0 4h-.6" fill="none" stroke="#f44336" stroke-width="1.5"/><rect x="1.3" y="12.2" width="13" height="2" rx="1" fill="#f44336"/></svg><div class="a nw" style="left:899px;top:69.00px;font-size:13px;line-height:20px;color:#cca700;"><span style="letter-spacing:0.232px">EducacionController.java</span></div><div class="a nw" style="left:1052.9375px;top:69.00px;font-size:13px;line-height:20px;color:#cca700;"><span style="letter-spacing:0.203px">1</span></div><div class="a" style="left:1089px;top:61px;width:187px;height:35px;background:#1e1e1e;"></div><svg class="a" style="left:1098.7px;top:71px;" width="16" height="16" viewBox="0 0 16 16"><path d="M2.8 1.7h9.8v5.5c0 2.9-1.6 3.9-3.2 3.9H6c-1.6 0-3.2-1-3.2-3.9z" fill="#f44336"/><path d="M12.2 2.5h.6a2 2 0 0 1 0 4h-.6" fill="none" stroke="#f44336" stroke-width="1.5"/><rect x="1.3" y="12.2" width="13" height="2" rx="1" fill="#f44336"/></svg><div class="a nw" style="left:1121px;top:69.00px;font-size:13px;line-height:20px;color:#ffffff;font-style:italic;"><span style="letter-spacing:-0.231px">EducacionService.java</span></div><svg class="a" style="left:1254px;top:71px;" width="16" height="16" viewBox="0 0 16 16"><path d="M4 4l8 8M12 4l-8 8" stroke="#ffffff" stroke-width="1.2"/></svg><div class="a" style="left:1277px;top:61px;width:244px;height:35px;background:#2d2d2d;"></div><svg class="a" style="left:1286.7px;top:71px;" width="16" height="16" viewBox="0 0 16 16"><path d="M2.8 1.7h9.8v5.5c0 2.9-1.6 3.9-3.2 3.9H6c-1.6 0-3.2-1-3.2-3.9z" fill="#f44336"/><path d="M12.2 2.5h.6a2 2 0 0 1 0 4h-.6" fill="none" stroke="#f44336" stroke-width="1.5"/><rect x="1.3" y="12.2" width="13" height="2" rx="1" fill="#f44336"/></svg><div class="a nw" style="left:1309px;top:69.00px;font-size:13px;line-height:20px;color:#969696;"><span style="letter-spacing:0.341px">HistorialLaboralController.java</span></div><div class="a" style="left:1522px;top:61px;width:233px;height:35px;background:#2d2d2d;"></div><svg class="a" style="left:1531.7px;top:71px;" width="16" height="16" viewBox="0 0 16 16"><path d="M2.8 1.7h9.8v5.5c0 2.9-1.6 3.9-3.2 3.9H6c-1.6 0-3.2-1-3.2-3.9z" fill="#f44336"/><path d="M12.2 2.5h.6a2 2 0 0 1 0 4h-.6" fill="none" stroke="#f44336" stroke-width="1.5"/><rect x="1.3" y="12.2" width="13" height="2" rx="1" fill="#f44336"/></svg><div class="a nw" style="left:1554px;top:69.00px;font-size:13px;line-height:20px;color:#cca700;"><span style="letter-spacing:0.245px">WebSecurityConfig.java</span></div><div class="a nw" style="left:1702.421875px;top:69.00px;font-size:13px;line-height:20px;color:#cca700;"><span style="letter-spacing:0.203px">3, M</span></div><svg class="a" style="left:1824px;top:71px;" width="16" height="16" viewBox="0 0 16 16"><path d="M3.5 2.5v11l9-5.5z" fill="none" stroke="#c5c5c5" stroke-width="1.1" stroke-linejoin="round"/></svg><svg class="a" style="left:1840px;top:71px;" width="16" height="16" viewBox="0 0 16 16"><path d="M4.5 6.5L8 10l3.5-3.5" fill="none" stroke="#c5c5c5" stroke-width="1.1"/></svg><svg class="a" style="left:1863px;top:71px;" width="16" height="16" viewBox="0 0 16 16"><rect x="1.5" y="1.5" width="13" height="13" rx=".5" fill="none" stroke="#c5c5c5" stroke-width="1.1"/><path d="M8 1.5v13" stroke="#c5c5c5" stroke-width="1.1"/></svg><svg class="a" style="left:1889px;top:71px;" width="16" height="16" viewBox="0 0 16 16"><circle cx="3" cy="8" r="1.2" fill="#c5c5c5"/><circle cx="8" cy="8" r="1.2" fill="#c5c5c5"/><circle cx="13" cy="8" r="1.2" fill="#c5c5c5"/></svg><div class="a" style="left:347px;top:96px;width:1571px;height:22px;background:#1e1e1e;"></div><div class="a nw" style="left:363px;top:98.30px;font-size:13px;line-height:20px;color:#a9a9a9;"><span style="letter-spacing:0.083px">src</span></div><svg class="a" style="left:380.578125px;top:99px;" width="16" height="16" viewBox="0 0 16 16"><path d="M6 3.5l4.5 4.5L6 12.5" fill="none" stroke="#a9a9a9" stroke-width="1.1"/></svg><div class="a nw" style="left:396.578125px;top:98.30px;font-size:13px;line-height:20px;color:#a9a9a9;"><span style="letter-spacing:0.664px">main</span></div><svg class="a" style="left:427.421875px;top:99px;" width="16" height="16" viewBox="0 0 16 16"><path d="M6 3.5l4.5 4.5L6 12.5" fill="none" stroke="#a9a9a9" stroke-width="1.1"/></svg><div class="a nw" style="left:443.421875px;top:98.30px;font-size:13px;line-height:20px;color:#a9a9a9;"><span style="letter-spacing:0.176px">java</span></div><svg class="a" style="left:467.984375px;top:99px;" width="16" height="16" viewBox="0 0 16 16"><path d="M6 3.5l4.5 4.5L6 12.5" fill="none" stroke="#a9a9a9" stroke-width="1.1"/></svg><div class="a nw" style="left:483.984375px;top:98.30px;font-size:13px;line-height:20px;color:#a9a9a9;"><span style="letter-spacing:0.562px">com</span></div><svg class="a" style="left:510.234375px;top:99px;" width="16" height="16" viewBox="0 0 16 16"><path d="M6 3.5l4.5 4.5L6 12.5" fill="none" stroke="#a9a9a9" stroke-width="1.1"/></svg><div class="a nw" style="left:526.234375px;top:98.30px;font-size:13px;line-height:20px;color:#a9a9a9;"><span style="letter-spacing:0.729px">portfolio</span></div><svg class="a" style="left:579.0625px;top:99px;" width="16" height="16" viewBox="0 0 16 16"><path d="M6 3.5l4.5 4.5L6 12.5" fill="none" stroke="#a9a9a9" stroke-width="1.1"/></svg><div class="a nw" style="left:595.0625px;top:98.30px;font-size:13px;line-height:20px;color:#a9a9a9;"><span style="letter-spacing:0.453px">gustavo</span></div><svg class="a" style="left:643.78125px;top:99px;" width="16" height="16" viewBox="0 0 16 16"><path d="M6 3.5l4.5 4.5L6 12.5" fill="none" stroke="#a9a9a9" stroke-width="1.1"/></svg><div class="a nw" style="left:659.78125px;top:98.30px;font-size:13px;line-height:20px;color:#a9a9a9;"><span style="letter-spacing:0.127px">services</span></div><svg class="a" style="left:708.484375px;top:99px;" width="16" height="16" viewBox="0 0 16 16"><path d="M6 3.5l4.5 4.5L6 12.5" fill="none" stroke="#a9a9a9" stroke-width="1.1"/></svg><svg class="a" style="left:724.5px;top:99px;" width="16" height="16" viewBox="0 0 16 16"><path d="M2.8 1.7h9.8v5.5c0 2.9-1.6 3.9-3.2 3.9H6c-1.6 0-3.2-1-3.2-3.9z" fill="#f44336"/><path d="M12.2 2.5h.6a2 2 0 0 1 0 4h-.6" fill="none" stroke="#f44336" stroke-width="1.5"/><rect x="1.3" y="12.2" width="13" height="2" rx="1" fill="#f44336"/></svg><div class="a nw" style="left:746.8px;top:98.30px;font-size:13px;line-height:20px;color:#a9a9a9;"><span style="letter-spacing:0.102px">EducacionService.java</span></div><svg class="a" style="left:880px;top:99px;" width="16" height="16" viewBox="0 0 16 16"><path d="M6 3.5l4.5 4.5L6 12.5" fill="none" stroke="#a9a9a9" stroke-width="1.1"/></svg><svg class="a" style="left:897px;top:99px;" width="16" height="16" viewBox="0 0 16 16"><path fill="#ee9d28" d="M11.34 9.71h.71l2.67-2.67v-.71L13.38 5h-.7l-1.82 1.81h-5V5.56l1.86-1.85V3l-2-2H5L1 5v.71l2 2h.71l1.14-1.15v5.79l.5.5H10v.52l1.33 1.34h.71l2.67-2.67v-.71L13.37 10h-.7l-1.86 1.85h-5v-4H10v.48l1.34 1.38zm1.69-3.65l.63.63-2 2-.63-.63 2-2zm0 5l.63.63-2 2-.63-.63 2-2zM3.35 6.65L2.06 5.36l3.29-3.29 1.29 1.29-3.29 3.29z"/></svg><div class="a nw" style="left:915.5px;top:98.30px;font-size:13px;line-height:20px;color:#a9a9a9;"><span style="letter-spacing:0.098px">EducacionService</span></div><svg class="a" style="left:1021px;top:99px;" width="16" height="16" viewBox="0 0 16 16"><path d="M6 3.5l4.5 4.5L6 12.5" fill="none" stroke="#a9a9a9" stroke-width="1.1"/></svg><svg class="a" style="left:1037px;top:99px;" width="16" height="16" viewBox="0 0 16 16"><path d="M8 1.5l6 3.2v6.6L8 14.5 2 11.3V4.7z M2 4.7l6 3.3 6-3.3 M8 8v6.5" fill="none" stroke="#b180d7" stroke-width="1.1" stroke-linejoin="round"/></svg><div class="a nw" style="left:1055.7px;top:98.30px;font-size:13px;line-height:20px;color:#a9a9a9;"><span style="letter-spacing:0.348px">obtenerEducacionPorId(Long)</span></div><div class="a" style="left:417px;top:859px;width:1369px;height:19px;border-top:2px solid #282828;border-bottom:2px solid #282828"></div><div class="a" style="left:417.0px;top:365px;width:34.1px;height:19px;background:rgba(255,255,64,0.07);"></div><div class="a" style="left:417.0px;top:384px;width:34.1px;height:19px;background:rgba(255,255,64,0.07);"></div><div class="a" style="left:417.0px;top:403px;width:34.1px;height:19px;background:rgba(255,255,64,0.07);"></div><div class="a" style="left:417.0px;top:422px;width:34.1px;height:19px;background:rgba(255,255,64,0.07);"></div><div class="a" style="left:417.0px;top:441px;width:34.1px;height:19px;background:rgba(255,255,64,0.07);"></div><div class="a" style="left:450.6px;top:441px;width:34.1px;height:19px;background:rgba(127,255,127,0.07);"></div><div class="a" style="left:417.0px;top:460px;width:34.1px;height:19px;background:rgba(255,255,64,0.07);"></div><div class="a" style="left:417.0px;top:498px;width:34.1px;height:19px;background:rgba(255,255,64,0.07);"></div><div class="a" style="left:417.0px;top:517px;width:34.1px;height:19px;background:rgba(255,255,64,0.07);"></div><div class="a" style="left:417.0px;top:536px;width:34.1px;height:19px;background:rgba(255,255,64,0.07);"></div><div class="a" style="left:450.6px;top:536px;width:34.1px;height:19px;background:rgba(127,255,127,0.07);"></div><div class="a" style="left:417.0px;top:555px;width:34.1px;height:19px;background:rgba(255,255,64,0.07);"></div><div class="a" style="left:417.0px;top:574px;width:34.1px;height:19px;background:rgba(255,255,64,0.07);"></div><div class="a" style="left:417.0px;top:612px;width:34.1px;height:19px;background:rgba(255,255,64,0.07);"></div><div class="a" style="left:417.0px;top:631px;width:34.1px;height:19px;background:rgba(255,255,64,0.07);"></div><div class="a" style="left:417.0px;top:650px;width:34.1px;height:19px;background:rgba(255,255,64,0.07);"></div><div class="a" style="left:450.6px;top:650px;width:34.1px;height:19px;background:rgba(127,255,127,0.07);"></div><div class="a" style="left:417.0px;top:669px;width:34.1px;height:19px;background:rgba(255,255,64,0.07);"></div><div class="a" style="left:450.6px;top:669px;width:34.1px;height:19px;background:rgba(127,255,127,0.07);"></div><div class="a" style="left:417.0px;top:688px;width:34.1px;height:19px;background:rgba(255,255,64,0.07);"></div><div class="a" style="left:450.6px;top:688px;width:34.1px;height:19px;background:rgba(127,255,127,0.07);"></div><div class="a" style="left:417.0px;top:707px;width:34.1px;height:19px;background:rgba(255,255,64,0.07);"></div><div class="a" style="left:450.6px;top:707px;width:34.1px;height:19px;background:rgba(127,255,127,0.07);"></div><div class="a" style="left:417.0px;top:726px;width:34.1px;height:19px;background:rgba(255,255,64,0.07);"></div><div class="a" style="left:450.6px;top:726px;width:34.1px;height:19px;background:rgba(127,255,127,0.07);"></div><div class="a" style="left:417.0px;top:745px;width:34.1px;height:19px;background:rgba(255,255,64,0.07);"></div><div class="a" style="left:450.6px;top:745px;width:34.1px;height:19px;background:rgba(127,255,127,0.07);"></div><div class="a" style="left:484.2px;top:745px;width:34.1px;height:19px;background:rgba(255,127,255,0.07);"></div><div class="a" style="left:417.0px;top:764px;width:34.1px;height:19px;background:rgba(255,255,64,0.07);"></div><div class="a" style="left:450.6px;top:764px;width:34.1px;height:19px;background:rgba(127,255,127,0.07);"></div><div class="a" style="left:484.2px;top:764px;width:34.1px;height:19px;background:rgba(255,127,255,0.07);"></div><div class="a" style="left:417.0px;top:783px;width:34.1px;height:19px;background:rgba(255,255,64,0.07);"></div><div class="a" style="left:450.6px;top:783px;width:34.1px;height:19px;background:rgba(127,255,127,0.07);"></div><div class="a" style="left:484.2px;top:783px;width:34.1px;height:19px;background:rgba(255,127,255,0.07);"></div><div class="a" style="left:517.8px;top:783px;width:34.1px;height:19px;background:rgba(79,236,236,0.07);"></div><div class="a" style="left:417.0px;top:802px;width:34.1px;height:19px;background:rgba(255,255,64,0.07);"></div><div class="a" style="left:450.6px;top:802px;width:34.1px;height:19px;background:rgba(127,255,127,0.07);"></div><div class="a" style="left:484.2px;top:802px;width:34.1px;height:19px;background:rgba(255,127,255,0.07);"></div><div class="a" style="left:517.8px;top:802px;width:34.1px;height:19px;background:rgba(79,236,236,0.07);"></div><div class="a" style="left:417.0px;top:821px;width:34.1px;height:19px;background:rgba(255,255,64,0.07);"></div><div class="a" style="left:450.6px;top:821px;width:34.1px;height:19px;background:rgba(127,255,127,0.07);"></div><div class="a" style="left:484.2px;top:821px;width:34.1px;height:19px;background:rgba(255,127,255,0.07);"></div><div class="a" style="left:517.8px;top:821px;width:34.1px;height:19px;background:rgba(79,236,236,0.07);"></div><div class="a" style="left:551.4px;top:821px;width:34.1px;height:19px;background:rgba(255,255,64,0.07);"></div><div class="a" style="left:417.0px;top:840px;width:34.1px;height:19px;background:rgba(255,255,64,0.07);"></div><div class="a" style="left:450.6px;top:840px;width:34.1px;height:19px;background:rgba(127,255,127,0.07);"></div><div class="a" style="left:484.2px;top:840px;width:34.1px;height:19px;background:rgba(255,127,255,0.07);"></div><div class="a" style="left:417.0px;top:859px;width:34.1px;height:19px;background:rgba(255,255,64,0.07);"></div><div class="a" style="left:450.6px;top:859px;width:34.1px;height:19px;background:rgba(127,255,127,0.07);"></div><div class="a" style="left:484.2px;top:859px;width:34.1px;height:19px;background:rgba(255,127,255,0.07);"></div><div class="a" style="left:417.0px;top:878px;width:34.1px;height:19px;background:rgba(255,255,64,0.07);"></div><div class="a" style="left:450.6px;top:878px;width:34.1px;height:19px;background:rgba(127,255,127,0.07);"></div><div class="a" style="left:417.0px;top:897px;width:34.1px;height:19px;background:rgba(255,255,64,0.07);"></div><div class="a" style="left:450.6px;top:897px;width:34.1px;height:19px;background:rgba(127,255,127,0.07);"></div><div class="a" style="left:417.0px;top:916px;width:34.1px;height:19px;background:rgba(255,255,64,0.07);"></div><div class="a" style="left:450.6px;top:916px;width:34.1px;height:19px;background:rgba(127,255,127,0.07);"></div><div class="a" style="left:417.0px;top:935px;width:34.1px;height:19px;background:rgba(255,255,64,0.07);"></div><div class="a" style="left:417.0px;top:954px;width:34.1px;height:19px;background:rgba(255,255,64,0.07);"></div><div class="a" style="left:417.0px;top:973px;width:34.1px;height:19px;background:rgba(255,255,64,0.07);"></div><div class="a" style="left:417.0px;top:992px;width:34.1px;height:19px;background:rgba(255,255,64,0.07);"></div><div class="a" style="left:450.6px;top:992px;width:34.1px;height:19px;background:rgba(127,255,127,0.07);"></div><div class="a" style="left:417.0px;top:365px;width:1px;height:646px;background:#404040;"></div><div class="a" style="left:450.6px;top:441px;width:1px;height:19px;background:#404040;"></div><div class="a" style="left:450.6px;top:536px;width:1px;height:19px;background:#404040;"></div><div class="a" style="left:450.6px;top:650px;width:1px;height:285px;background:#404040;"></div><div class="a" style="left:484.2px;top:745px;width:1px;height:133px;background:#707070;"></div><div class="a" style="left:517.8px;top:783px;width:1px;height:57px;background:#404040;"></div><div class="a" style="left:450.6px;top:992px;width:1px;height:19px;background:#404040;"></div><div class="a code" style="left:331px;top:120px;width:60px;text-align:right;color:#858585">1</div><div class="a code" style="left:331px;top:139px;width:60px;text-align:right;color:#858585">2</div><div class="a code" style="left:331px;top:158px;width:60px;text-align:right;color:#858585">3</div><div class="a code" style="left:331px;top:177px;width:60px;text-align:right;color:#858585">4</div><div class="a code" style="left:331px;top:196px;width:60px;text-align:right;color:#858585">5</div><div class="a code" style="left:331px;top:215px;width:60px;text-align:right;color:#858585">6</div><div class="a code" style="left:331px;top:234px;width:60px;text-align:right;color:#858585">7</div><div class="a code" style="left:331px;top:253px;width:60px;text-align:right;color:#858585">8</div><div class="a code" style="left:331px;top:272px;width:60px;text-align:right;color:#858585">9</div><div class="a code" style="left:331px;top:291px;width:60px;text-align:right;color:#858585">10</div><div class="a code" style="left:331px;top:310px;width:60px;text-align:right;color:#858585">11</div><div class="a code" style="left:331px;top:329px;width:60px;text-align:right;color:#858585">12</div><div class="a code" style="left:331px;top:348px;width:60px;text-align:right;color:#858585">13</div><div class="a code" style="left:331px;top:367px;width:60px;text-align:right;color:#858585">14</div><div class="a code" style="left:331px;top:386px;width:60px;text-align:right;color:#858585">15</div><div class="a code" style="left:331px;top:405px;width:60px;text-align:right;color:#858585">16</div><div class="a code" style="left:331px;top:424px;width:60px;text-align:right;color:#858585">17</div><div class="a code" style="left:331px;top:443px;width:60px;text-align:right;color:#858585">18</div><div class="a code" style="left:331px;top:462px;width:60px;text-align:right;color:#858585">19</div><div class="a code" style="left:331px;top:481px;width:60px;text-align:right;color:#858585">20</div><div class="a code" style="left:331px;top:500px;width:60px;text-align:right;color:#858585">21</div><div class="a code" style="left:331px;top:519px;width:60px;text-align:right;color:#858585">22</div><div class="a code" style="left:331px;top:538px;width:60px;text-align:right;color:#858585">23</div><div class="a code" style="left:331px;top:557px;width:60px;text-align:right;color:#858585">24</div><div class="a code" style="left:331px;top:576px;width:60px;text-align:right;color:#858585">25</div><div class="a code" style="left:331px;top:595px;width:60px;text-align:right;color:#858585">26</div><div class="a code" style="left:331px;top:614px;width:60px;text-align:right;color:#858585">27</div><div class="a code" style="left:331px;top:633px;width:60px;text-align:right;color:#858585">28</div><div class="a code" style="left:331px;top:652px;width:60px;text-align:right;color:#858585">29</div><div class="a code" style="left:331px;top:671px;width:60px;text-align:right;color:#858585">30</div><div class="a code" style="left:331px;top:690px;width:60px;text-align:right;color:#858585">31</div><div class="a code" style="left:331px;top:709px;width:60px;text-align:right;color:#858585">32</div><div class="a code" style="left:331px;top:728px;width:60px;text-align:right;color:#858585">33</div><div class="a code" style="left:331px;top:747px;width:60px;text-align:right;color:#858585">34</div><div class="a code" style="left:331px;top:766px;width:60px;text-align:right;color:#858585">35</div><div class="a code" style="left:331px;top:785px;width:60px;text-align:right;color:#858585">36</div><div class="a code" style="left:331px;top:804px;width:60px;text-align:right;color:#858585">37</div><div class="a code" style="left:331px;top:823px;width:60px;text-align:right;color:#858585">38</div><div class="a code" style="left:331px;top:842px;width:60px;text-align:right;color:#858585">39</div><div class="a code" style="left:331px;top:861px;width:60px;text-align:right;color:#c6c6c6">40</div><div class="a code" style="left:331px;top:880px;width:60px;text-align:right;color:#858585">41</div><div class="a code" style="left:331px;top:899px;width:60px;text-align:right;color:#858585">42</div><div class="a code" style="left:331px;top:918px;width:60px;text-align:right;color:#858585">43</div><div class="a code" style="left:331px;top:937px;width:60px;text-align:right;color:#858585">44</div><div class="a code" style="left:331px;top:956px;width:60px;text-align:right;color:#858585">45</div><div class="a code" style="left:331px;top:975px;width:60px;text-align:right;color:#858585">46</div><div class="a code" style="left:331px;top:994px;width:60px;text-align:right;color:#858585">47</div><div class="a code" style="left:417px;top:119px"><span style="color:#569cd6">package</span> <span style="color:#4ec9b0">com</span><span style="color:#d4d4d4">.</span><span style="color:#4ec9b0">portfolio</span><span style="color:#d4d4d4">.</span><span style="color:#4ec9b0">gustavo</span><span style="color:#d4d4d4">.</span><span style="color:#4ec9b0">services</span><span style="color:#d4d4d4">;</span></div><div class="a code" style="left:417px;top:138px"></div><div class="a code" style="left:417px;top:157px"><span style="color:#569cd6">import</span> <span style="color:#4ec9b0">java</span><span style="color:#d4d4d4">.</span><span style="color:#4ec9b0">util</span><span style="color:#d4d4d4">.</span><span style="color:#4ec9b0">ArrayList</span><span style="color:#d4d4d4">;</span></div><div class="a code" style="left:417px;top:176px"><span style="color:#569cd6">import</span> <span style="color:#4ec9b0">java</span><span style="color:#d4d4d4">.</span><span style="color:#4ec9b0">util</span><span style="color:#d4d4d4">.</span><span style="color:#4ec9b0">Optional</span><span style="color:#d4d4d4">;</span></div><div class="a code" style="left:417px;top:195px"></div><div class="a code" style="left:417px;top:214px"><span style="color:#569cd6">import</span> <span style="color:#4ec9b0">org</span><span style="color:#d4d4d4">.</span><span style="color:#4ec9b0">springframework</span><span style="color:#d4d4d4">.</span><span style="color:#4ec9b0">beans</span><span style="color:#d4d4d4">.</span><span style="color:#4ec9b0">factory</span><span style="color:#d4d4d4">.</span><span style="color:#4ec9b0">annotation</span><span style="color:#d4d4d4">.</span><span style="color:#4ec9b0">Autowired</span><span style="color:#d4d4d4">;</span></div><div class="a code" style="left:417px;top:233px"><span style="color:#569cd6">import</span> <span style="color:#4ec9b0">org</span><span style="color:#d4d4d4">.</span><span style="color:#4ec9b0">springframework</span><span style="color:#d4d4d4">.</span><span style="color:#4ec9b0">stereotype</span><span style="color:#d4d4d4">.</span><span style="color:#4ec9b0">Service</span><span style="color:#d4d4d4">;</span></div><div class="a code" style="left:417px;top:252px"></div><div class="a code" style="left:417px;top:271px"><span style="color:#569cd6">import</span> <span style="color:#4ec9b0">com</span><span style="color:#d4d4d4">.</span><span style="color:#4ec9b0">portfolio</span><span style="color:#d4d4d4">.</span><span style="color:#4ec9b0">gustavo</span><span style="color:#d4d4d4">.</span><span style="color:#4ec9b0">models</span><span style="color:#d4d4d4">.</span><span style="color:#4ec9b0">EducacionModel</span><span style="color:#d4d4d4">;</span></div><div class="a code" style="left:417px;top:290px"><span style="color:#569cd6">import</span> <span style="color:#4ec9b0">com</span><span style="color:#d4d4d4">.</span><span style="color:#4ec9b0">portfolio</span><span style="color:#d4d4d4">.</span><span style="color:#4ec9b0">gustavo</span><span style="color:#d4d4d4">.</span><span style="color:#4ec9b0">repositories</span><span style="color:#d4d4d4">.</span><span style="color:#4ec9b0">EducacionRepository</span><span style="color:#d4d4d4">;</span></div><div class="a code" style="left:417px;top:309px"></div><div class="a code" style="left:417px;top:328px"><span style="color:#d4d4d4">@</span><span style="color:#4ec9b0">Service</span></div><div class="a code" style="left:417px;top:347px"><span style="color:#569cd6">public</span> <span style="color:#569cd6">class</span> <span style="color:#4ec9b0">EducacionService</span> <span style="color:#ffd700">{</span></div><div class="a code" style="left:417px;top:366px">    <span style="color:#d4d4d4">@</span><span style="color:#4ec9b0">Autowired</span></div><div class="a code" style="left:417px;top:385px">    <span style="color:#4ec9b0">EducacionRepository</span> <span style="color:#9cdcfe">educacionRepository</span><span style="color:#d4d4d4">;</span></div><div class="a code" style="left:417px;top:404px">    </div><div class="a code" style="left:417px;top:423px">    <span style="color:#569cd6">public</span> <span style="color:#4ec9b0">ArrayList</span><span style="color:#d4d4d4">&lt;</span><span style="color:#4ec9b0">EducacionModel</span><span style="color:#d4d4d4">&gt;</span> <span style="color:#dcdcaa">obtenerEducacion</span><span style="color:#da70d6">(</span><span style="color:#da70d6">)</span><span style="color:#da70d6">{</span></div><div class="a code" style="left:417px;top:442px">        <span style="color:#c586c0">return</span> <span style="color:#179fff">(</span><span style="color:#4ec9b0">ArrayList</span><span style="color:#d4d4d4">&lt;</span><span style="color:#4ec9b0">EducacionModel</span><span style="color:#d4d4d4">&gt;</span><span style="color:#179fff">)</span><span style="color:#9cdcfe">educacionRepository</span><span style="color:#d4d4d4">.</span><span style="color:#dcdcaa">findAll</span><span style="color:#179fff">(</span><span style="color:#179fff">)</span><span style="color:#d4d4d4">;</span></div><div class="a code" style="left:417px;top:461px">    <span style="color:#da70d6">}</span></div><div class="a code" style="left:417px;top:480px"></div><div class="a code" style="left:417px;top:499px">    <span style="color:#6a9955">//SE OBTIENE LA EDUCACION POR EL ID DE LA EDUCACION UNA SOLA</span></div><div class="a code" style="left:417px;top:518px">    <span style="color:#569cd6">public</span> <span style="color:#4ec9b0">Optional</span><span style="color:#d4d4d4">&lt;</span><span style="color:#4ec9b0">EducacionModel</span><span style="color:#d4d4d4">&gt;</span> <span style="color:#dcdcaa">obtenerEducacionIdNoList</span><span style="color:#da70d6">(</span><span style="color:#4ec9b0">Long</span> <span style="color:#9cdcfe">idEducacion</span><span style="color:#da70d6">)</span> <span style="color:#da70d6">{</span></div><div class="a code" style="left:417px;top:537px">        <span style="color:#c586c0">return</span> <span style="color:#9cdcfe">educacionRepository</span><span style="color:#d4d4d4">.</span><span style="color:#dcdcaa">findById</span><span style="color:#179fff">(</span><span style="color:#9cdcfe">idEducacion</span><span style="color:#179fff">)</span><span style="color:#d4d4d4">;</span></div><div class="a code" style="left:417px;top:556px">    <span style="color:#da70d6">}</span></div><div class="a code" style="left:417px;top:575px">    </div><div class="a code" style="left:417px;top:594px"></div><div class="a code" style="left:417px;top:613px">    <span style="color:#6a9955">//SE OBTIENE LA EDUCACION DE UNA PERSONA EN ESPECIFICO</span></div><div class="a code" style="left:417px;top:632px">    <span style="color:#569cd6">public</span> <span style="color:#4ec9b0">ArrayList</span><span style="color:#d4d4d4">&lt;</span><span style="color:#4ec9b0">EducacionModel</span><span style="color:#d4d4d4">&gt;</span> <span style="color:#dcdcaa">obtenerEducacionPorId</span><span style="color:#da70d6">(</span><span style="color:#4ec9b0">Long</span> <span style="color:#9cdcfe">personaId</span><span style="color:#da70d6">)</span><span style="color:#da70d6">{</span></div><div class="a code" style="left:417px;top:651px">        </div><div class="a code" style="left:417px;top:670px">        <span style="color:#4ec9b0">ArrayList</span><span style="color:#d4d4d4">&lt;</span><span style="color:#4ec9b0">EducacionModel</span><span style="color:#d4d4d4">&gt;</span> <span style="color:#9cdcfe">educacionTodas</span> <span style="color:#d4d4d4">=</span> <span style="color:#179fff">(</span><span style="color:#4ec9b0">ArrayList</span><span style="color:#d4d4d4">&lt;</span><span style="color:#4ec9b0">EducacionModel</span><span style="color:#d4d4d4">&gt;</span><span style="color:#179fff">)</span><span style="color:#9cdcfe">educacionRepository</span><span style="color:#d4d4d4">.</span><span style="color:#dcdcaa">findAll</span><span style="color:#179fff">(</span><span style="color:#179fff">)</span><span style="color:#d4d4d4">;</span></div><div class="a code" style="left:417px;top:689px">        <span style="color:#4ec9b0">ArrayList</span><span style="color:#d4d4d4">&lt;</span><span style="color:#4ec9b0">EducacionModel</span><span style="color:#d4d4d4">&gt;</span> <span style="color:#9cdcfe">educacionFiltro</span> <span style="color:#d4d4d4">=</span> <span style="color:#c586c0">new</span> <span style="color:#dcdcaa">ArrayList</span><span style="color:#d4d4d4">&lt;</span><span style="color:#d4d4d4">&gt;</span><span style="color:#179fff">(</span><span style="color:#179fff">)</span><span style="color:#d4d4d4">;</span></div><div class="a code" style="left:417px;top:708px">        </div><div class="a code" style="left:417px;top:727px">        <span style="color:#c586c0">for</span> <span style="color:#179fff">(</span><span style="color:#4ec9b0">EducacionModel</span> <span style="color:#9cdcfe">educacionModel</span> <span style="color:#d4d4d4">:</span> <span style="color:#9cdcfe">educacionTodas</span><span style="color:#179fff">)</span> <span style="color:#179fff">{</span></div><div class="a code" style="left:417px;top:746px">            </div><div class="a code" style="left:417px;top:765px">            <span style="color:#c586c0">if</span><span style="color:#ffd700">(</span><span style="color:#9cdcfe">educacionModel</span><span style="color:#d4d4d4">.</span><span style="color:#dcdcaa">getPersonaId</span><span style="color:#da70d6">(</span><span style="color:#da70d6">)</span> <span style="color:#d4d4d4">==</span> <span style="color:#9cdcfe">personaId</span><span style="color:#ffd700">)</span> <span style="color:#ffd700">{</span></div><div class="a code" style="left:417px;top:784px">                </div><div class="a code" style="left:417px;top:803px">                <span style="color:#9cdcfe">educacionFiltro</span><span style="color:#d4d4d4">.</span><span style="color:#dcdcaa">add</span><span style="color:#da70d6">(</span><span style="color:#9cdcfe">educacionModel</span><span style="color:#da70d6">)</span><span style="color:#d4d4d4">;</span></div><div class="a code" style="left:417px;top:822px">                    </div><div class="a code" style="left:417px;top:841px">            <span style="color:#ffd700">}</span></div><div class="a code" style="left:417px;top:860px">            </div><div class="a code" style="left:417px;top:879px">        <span style="color:#179fff">}</span></div><div class="a code" style="left:417px;top:898px">        </div><div class="a code" style="left:417px;top:917px">        <span style="color:#c586c0">return</span> <span style="color:#9cdcfe">educacionFiltro</span><span style="color:#d4d4d4">;</span></div><div class="a code" style="left:417px;top:936px">    <span style="color:#da70d6">}</span></div><div class="a code" style="left:417px;top:955px">    </div><div class="a code" style="left:417px;top:974px">    <span style="color:#569cd6">public</span> <span style="color:#4ec9b0">EducacionModel</span> <span style="color:#dcdcaa">guardarEducacion</span><span style="color:#da70d6">(</span><span style="color:#4ec9b0">EducacionModel</span> <span style="color:#9cdcfe">educacion</span><span style="color:#da70d6">)</span> <span style="color:#da70d6">{</span></div><div class="a code" style="left:417px;top:993px">        <span style="color:#c586c0">return</span> <span style="color:#9cdcfe">educacionRepository</span><span style="color:#d4d4d4">.</span><span style="color:#dcdcaa">save</span><span style="color:#179fff">(</span><span style="color:#9cdcfe">educacion</span><span style="color:#179fff">)</span><span style="color:#d4d4d4">;</span></div><svg class="a" style="left:1794px;top:118px;" width="112" height="892" viewBox="0 0 112 892"><rect x="0" y="78" width="112" height="2" fill="#264f78" fill-opacity="0.6"/><g fill-opacity="0.4"><rect x="0" y="0" width="7" height="2" fill="#569cd6"/><rect x="8" y="0" width="3" height="2" fill="#4ec9b0"/><rect x="11" y="0" width="1" height="2" fill="#d4d4d4"/><rect x="12" y="0" width="9" height="2" fill="#4ec9b0"/><rect x="21" y="0" width="1" height="2" fill="#d4d4d4"/><rect x="22" y="0" width="7" height="2" fill="#4ec9b0"/><rect x="29" y="0" width="1" height="2" fill="#d4d4d4"/><rect x="30" y="0" width="8" height="2" fill="#4ec9b0"/><rect x="38" y="0" width="1" height="2" fill="#d4d4d4"/><rect x="0" y="4" width="6" height="2" fill="#569cd6"/><rect x="7" y="4" width="4" height="2" fill="#4ec9b0"/><rect x="11" y="4" width="1" height="2" fill="#d4d4d4"/><rect x="12" y="4" width="4" height="2" fill="#4ec9b0"/><rect x="16" y="4" width="1" height="2" fill="#d4d4d4"/><rect x="17" y="4" width="9" height="2" fill="#4ec9b0"/><rect x="26" y="4" width="1" height="2" fill="#d4d4d4"/><rect x="0" y="6" width="6" height="2" fill="#569cd6"/><rect x="7" y="6" width="4" height="2" fill="#4ec9b0"/><rect x="11" y="6" width="1" height="2" fill="#d4d4d4"/><rect x="12" y="6" width="4" height="2" fill="#4ec9b0"/><rect x="16" y="6" width="1" height="2" fill="#d4d4d4"/><rect x="17" y="6" width="8" height="2" fill="#4ec9b0"/><rect x="25" y="6" width="1" height="2" fill="#d4d4d4"/><rect x="0" y="10" width="6" height="2" fill="#569cd6"/><rect x="7" y="10" width="3" height="2" fill="#4ec9b0"/><rect x="10" y="10" width="1" height="2" fill="#d4d4d4"/><rect x="11" y="10" width="15" height="2" fill="#4ec9b0"/><rect x="26" y="10" width="1" height="2" fill="#d4d4d4"/><rect x="27" y="10" width="5" height="2" fill="#4ec9b0"/><rect x="32" y="10" width="1" height="2" fill="#d4d4d4"/><rect x="33" y="10" width="7" height="2" fill="#4ec9b0"/><rect x="40" y="10" width="1" height="2" fill="#d4d4d4"/><rect x="41" y="10" width="10" height="2" fill="#4ec9b0"/><rect x="51" y="10" width="1" height="2" fill="#d4d4d4"/><rect x="52" y="10" width="9" height="2" fill="#4ec9b0"/><rect x="61" y="10" width="1" height="2" fill="#d4d4d4"/><rect x="0" y="12" width="6" height="2" fill="#569cd6"/><rect x="7" y="12" width="3" height="2" fill="#4ec9b0"/><rect x="10" y="12" width="1" height="2" fill="#d4d4d4"/><rect x="11" y="12" width="15" height="2" fill="#4ec9b0"/><rect x="26" y="12" width="1" height="2" fill="#d4d4d4"/><rect x="27" y="12" width="10" height="2" fill="#4ec9b0"/><rect x="37" y="12" width="1" height="2" fill="#d4d4d4"/><rect x="38" y="12" width="7" height="2" fill="#4ec9b0"/><rect x="45" y="12" width="1" height="2" fill="#d4d4d4"/><rect x="0" y="16" width="6" height="2" fill="#569cd6"/><rect x="7" y="16" width="3" height="2" fill="#4ec9b0"/><rect x="10" y="16" width="1" height="2" fill="#d4d4d4"/><rect x="11" y="16" width="9" height="2" fill="#4ec9b0"/><rect x="20" y="16" width="1" height="2" fill="#d4d4d4"/><rect x="21" y="16" width="7" height="2" fill="#4ec9b0"/><rect x="28" y="16" width="1" height="2" fill="#d4d4d4"/><rect x="29" y="16" width="6" height="2" fill="#4ec9b0"/><rect x="35" y="16" width="1" height="2" fill="#d4d4d4"/><rect x="36" y="16" width="14" height="2" fill="#4ec9b0"/><rect x="50" y="16" width="1" height="2" fill="#d4d4d4"/><rect x="0" y="18" width="6" height="2" fill="#569cd6"/><rect x="7" y="18" width="3" height="2" fill="#4ec9b0"/><rect x="10" y="18" width="1" height="2" fill="#d4d4d4"/><rect x="11" y="18" width="9" height="2" fill="#4ec9b0"/><rect x="20" y="18" width="1" height="2" fill="#d4d4d4"/><rect x="21" y="18" width="7" height="2" fill="#4ec9b0"/><rect x="28" y="18" width="1" height="2" fill="#d4d4d4"/><rect x="29" y="18" width="12" height="2" fill="#4ec9b0"/><rect x="41" y="18" width="1" height="2" fill="#d4d4d4"/><rect x="42" y="18" width="19" height="2" fill="#4ec9b0"/><rect x="61" y="18" width="1" height="2" fill="#d4d4d4"/><rect x="0" y="22" width="1" height="2" fill="#d4d4d4"/><rect x="1" y="22" width="7" height="2" fill="#4ec9b0"/><rect x="0" y="24" width="6" height="2" fill="#569cd6"/><rect x="7" y="24" width="5" height="2" fill="#569cd6"/><rect x="13" y="24" width="16" height="2" fill="#4ec9b0"/><rect x="30" y="24" width="1" height="2" fill="#d4d4d4"/><rect x="4" y="26" width="1" height="2" fill="#d4d4d4"/><rect x="5" y="26" width="9" height="2" fill="#4ec9b0"/><rect x="4" y="28" width="19" height="2" fill="#4ec9b0"/><rect x="24" y="28" width="19" height="2" fill="#9cdcfe"/><rect x="43" y="28" width="1" height="2" fill="#d4d4d4"/><rect x="4" y="32" width="6" height="2" fill="#569cd6"/><rect x="11" y="32" width="9" height="2" fill="#4ec9b0"/><rect x="20" y="32" width="1" height="2" fill="#d4d4d4"/><rect x="21" y="32" width="14" height="2" fill="#4ec9b0"/><rect x="35" y="32" width="1" height="2" fill="#d4d4d4"/><rect x="37" y="32" width="16" height="2" fill="#dcdcaa"/><rect x="53" y="32" width="1" height="2" fill="#d4d4d4"/><rect x="54" y="32" width="1" height="2" fill="#d4d4d4"/><rect x="55" y="32" width="1" height="2" fill="#d4d4d4"/><rect x="8" y="34" width="6" height="2" fill="#c586c0"/><rect x="15" y="34" width="1" height="2" fill="#d4d4d4"/><rect x="16" y="34" width="9" height="2" fill="#4ec9b0"/><rect x="25" y="34" width="1" height="2" fill="#d4d4d4"/><rect x="26" y="34" width="14" height="2" fill="#4ec9b0"/><rect x="40" y="34" width="1" height="2" fill="#d4d4d4"/><rect x="41" y="34" width="1" height="2" fill="#d4d4d4"/><rect x="42" y="34" width="19" height="2" fill="#9cdcfe"/><rect x="61" y="34" width="1" height="2" fill="#d4d4d4"/><rect x="62" y="34" width="7" height="2" fill="#dcdcaa"/><rect x="69" y="34" width="1" height="2" fill="#d4d4d4"/><rect x="70" y="34" width="1" height="2" fill="#d4d4d4"/><rect x="71" y="34" width="1" height="2" fill="#d4d4d4"/><rect x="4" y="36" width="1" height="2" fill="#d4d4d4"/><rect x="4" y="40" width="4" height="2" fill="#6a9955"/><rect x="9" y="40" width="7" height="2" fill="#6a9955"/><rect x="17" y="40" width="2" height="2" fill="#6a9955"/><rect x="20" y="40" width="9" height="2" fill="#6a9955"/><rect x="30" y="40" width="3" height="2" fill="#6a9955"/><rect x="34" y="40" width="2" height="2" fill="#6a9955"/><rect x="37" y="40" width="2" height="2" fill="#6a9955"/><rect x="40" y="40" width="2" height="2" fill="#6a9955"/><rect x="43" y="40" width="2" height="2" fill="#6a9955"/><rect x="46" y="40" width="9" height="2" fill="#6a9955"/><rect x="56" y="40" width="3" height="2" fill="#6a9955"/><rect x="60" y="40" width="4" height="2" fill="#6a9955"/><rect x="4" y="42" width="6" height="2" fill="#569cd6"/><rect x="11" y="42" width="8" height="2" fill="#4ec9b0"/><rect x="19" y="42" width="1" height="2" fill="#d4d4d4"/><rect x="20" y="42" width="14" height="2" fill="#4ec9b0"/><rect x="34" y="42" width="1" height="2" fill="#d4d4d4"/><rect x="36" y="42" width="24" height="2" fill="#dcdcaa"/><rect x="60" y="42" width="1" height="2" fill="#d4d4d4"/><rect x="61" y="42" width="4" height="2" fill="#4ec9b0"/><rect x="66" y="42" width="11" height="2" fill="#9cdcfe"/><rect x="77" y="42" width="1" height="2" fill="#d4d4d4"/><rect x="79" y="42" width="1" height="2" fill="#d4d4d4"/><rect x="8" y="44" width="6" height="2" fill="#c586c0"/><rect x="15" y="44" width="19" height="2" fill="#9cdcfe"/><rect x="34" y="44" width="1" height="2" fill="#d4d4d4"/><rect x="35" y="44" width="8" height="2" fill="#dcdcaa"/><rect x="43" y="44" width="1" height="2" fill="#d4d4d4"/><rect x="44" y="44" width="11" height="2" fill="#9cdcfe"/><rect x="55" y="44" width="1" height="2" fill="#d4d4d4"/><rect x="56" y="44" width="1" height="2" fill="#d4d4d4"/><rect x="4" y="46" width="1" height="2" fill="#d4d4d4"/><rect x="4" y="52" width="4" height="2" fill="#6a9955"/><rect x="9" y="52" width="7" height="2" fill="#6a9955"/><rect x="17" y="52" width="2" height="2" fill="#6a9955"/><rect x="20" y="52" width="9" height="2" fill="#6a9955"/><rect x="30" y="52" width="2" height="2" fill="#6a9955"/><rect x="33" y="52" width="3" height="2" fill="#6a9955"/><rect x="37" y="52" width="7" height="2" fill="#6a9955"/><rect x="45" y="52" width="2" height="2" fill="#6a9955"/><rect x="48" y="52" width="10" height="2" fill="#6a9955"/><rect x="4" y="54" width="6" height="2" fill="#569cd6"/><rect x="11" y="54" width="9" height="2" fill="#4ec9b0"/><rect x="20" y="54" width="1" height="2" fill="#d4d4d4"/><rect x="21" y="54" width="14" height="2" fill="#4ec9b0"/><rect x="35" y="54" width="1" height="2" fill="#d4d4d4"/><rect x="37" y="54" width="21" height="2" fill="#dcdcaa"/><rect x="58" y="54" width="1" height="2" fill="#d4d4d4"/><rect x="59" y="54" width="4" height="2" fill="#4ec9b0"/><rect x="64" y="54" width="9" height="2" fill="#9cdcfe"/><rect x="73" y="54" width="1" height="2" fill="#d4d4d4"/><rect x="74" y="54" width="1" height="2" fill="#d4d4d4"/><rect x="8" y="58" width="9" height="2" fill="#4ec9b0"/><rect x="17" y="58" width="1" height="2" fill="#d4d4d4"/><rect x="18" y="58" width="14" height="2" fill="#4ec9b0"/><rect x="32" y="58" width="1" height="2" fill="#d4d4d4"/><rect x="34" y="58" width="14" height="2" fill="#9cdcfe"/><rect x="49" y="58" width="1" height="2" fill="#d4d4d4"/><rect x="51" y="58" width="1" height="2" fill="#d4d4d4"/><rect x="52" y="58" width="9" height="2" fill="#4ec9b0"/><rect x="61" y="58" width="1" height="2" fill="#d4d4d4"/><rect x="62" y="58" width="14" height="2" fill="#4ec9b0"/><rect x="76" y="58" width="1" height="2" fill="#d4d4d4"/><rect x="77" y="58" width="1" height="2" fill="#d4d4d4"/><rect x="78" y="58" width="19" height="2" fill="#9cdcfe"/><rect x="97" y="58" width="1" height="2" fill="#d4d4d4"/><rect x="98" y="58" width="7" height="2" fill="#dcdcaa"/><rect x="105" y="58" width="1" height="2" fill="#d4d4d4"/><rect x="106" y="58" width="1" height="2" fill="#d4d4d4"/><rect x="107" y="58" width="1" height="2" fill="#d4d4d4"/><rect x="8" y="60" width="9" height="2" fill="#4ec9b0"/><rect x="17" y="60" width="1" height="2" fill="#d4d4d4"/><rect x="18" y="60" width="14" height="2" fill="#4ec9b0"/><rect x="32" y="60" width="1" height="2" fill="#d4d4d4"/><rect x="34" y="60" width="15" height="2" fill="#9cdcfe"/><rect x="50" y="60" width="1" height="2" fill="#d4d4d4"/><rect x="52" y="60" width="3" height="2" fill="#c586c0"/><rect x="56" y="60" width="9" height="2" fill="#dcdcaa"/><rect x="65" y="60" width="1" height="2" fill="#d4d4d4"/><rect x="66" y="60" width="1" height="2" fill="#d4d4d4"/><rect x="67" y="60" width="1" height="2" fill="#d4d4d4"/><rect x="68" y="60" width="1" height="2" fill="#d4d4d4"/><rect x="69" y="60" width="1" height="2" fill="#d4d4d4"/><rect x="8" y="64" width="3" height="2" fill="#c586c0"/><rect x="12" y="64" width="1" height="2" fill="#d4d4d4"/><rect x="13" y="64" width="14" height="2" fill="#4ec9b0"/><rect x="28" y="64" width="14" height="2" fill="#9cdcfe"/><rect x="43" y="64" width="1" height="2" fill="#d4d4d4"/><rect x="45" y="64" width="14" height="2" fill="#9cdcfe"/><rect x="59" y="64" width="1" height="2" fill="#d4d4d4"/><rect x="61" y="64" width="1" height="2" fill="#d4d4d4"/><rect x="12" y="68" width="2" height="2" fill="#c586c0"/><rect x="14" y="68" width="1" height="2" fill="#d4d4d4"/><rect x="15" y="68" width="14" height="2" fill="#9cdcfe"/><rect x="29" y="68" width="1" height="2" fill="#d4d4d4"/><rect x="30" y="68" width="12" height="2" fill="#dcdcaa"/><rect x="42" y="68" width="1" height="2" fill="#d4d4d4"/><rect x="43" y="68" width="1" height="2" fill="#d4d4d4"/><rect x="45" y="68" width="2" height="2" fill="#d4d4d4"/><rect x="48" y="68" width="9" height="2" fill="#9cdcfe"/><rect x="57" y="68" width="1" height="2" fill="#d4d4d4"/><rect x="59" y="68" width="1" height="2" fill="#d4d4d4"/><rect x="16" y="72" width="15" height="2" fill="#9cdcfe"/><rect x="31" y="72" width="1" height="2" fill="#d4d4d4"/><rect x="32" y="72" width="3" height="2" fill="#dcdcaa"/><rect x="35" y="72" width="1" height="2" fill="#d4d4d4"/><rect x="36" y="72" width="14" height="2" fill="#9cdcfe"/><rect x="50" y="72" width="1" height="2" fill="#d4d4d4"/><rect x="51" y="72" width="1" height="2" fill="#d4d4d4"/><rect x="12" y="76" width="1" height="2" fill="#d4d4d4"/><rect x="8" y="80" width="1" height="2" fill="#d4d4d4"/><rect x="8" y="84" width="6" height="2" fill="#c586c0"/><rect x="15" y="84" width="15" height="2" fill="#9cdcfe"/><rect x="30" y="84" width="1" height="2" fill="#d4d4d4"/><rect x="4" y="86" width="1" height="2" fill="#d4d4d4"/><rect x="4" y="90" width="6" height="2" fill="#569cd6"/><rect x="11" y="90" width="14" height="2" fill="#4ec9b0"/><rect x="26" y="90" width="16" height="2" fill="#dcdcaa"/><rect x="42" y="90" width="1" height="2" fill="#d4d4d4"/><rect x="43" y="90" width="14" height="2" fill="#4ec9b0"/><rect x="58" y="90" width="9" height="2" fill="#9cdcfe"/><rect x="67" y="90" width="1" height="2" fill="#d4d4d4"/><rect x="69" y="90" width="1" height="2" fill="#d4d4d4"/><rect x="8" y="92" width="6" height="2" fill="#c586c0"/><rect x="15" y="92" width="19" height="2" fill="#9cdcfe"/><rect x="34" y="92" width="1" height="2" fill="#d4d4d4"/><rect x="35" y="92" width="4" height="2" fill="#dcdcaa"/><rect x="39" y="92" width="1" height="2" fill="#d4d4d4"/><rect x="40" y="92" width="9" height="2" fill="#9cdcfe"/><rect x="49" y="92" width="1" height="2" fill="#d4d4d4"/><rect x="50" y="92" width="1" height="2" fill="#d4d4d4"/><rect x="4" y="94" width="1" height="2" fill="#d4d4d4"/><rect x="4" y="98" width="6" height="2" fill="#569cd6"/><rect x="11" y="98" width="14" height="2" fill="#4ec9b0"/><rect x="26" y="98" width="15" height="2" fill="#dcdcaa"/><rect x="41" y="98" width="1" height="2" fill="#d4d4d4"/><rect x="42" y="98" width="14" height="2" fill="#4ec9b0"/><rect x="57" y="98" width="9" height="2" fill="#9cdcfe"/><rect x="66" y="98" width="1" height="2" fill="#d4d4d4"/><rect x="68" y="98" width="1" height="2" fill="#d4d4d4"/><rect x="8" y="100" width="6" height="2" fill="#c586c0"/><rect x="15" y="100" width="19" height="2" fill="#9cdcfe"/><rect x="34" y="100" width="1" height="2" fill="#d4d4d4"/><rect x="35" y="100" width="4" height="2" fill="#dcdcaa"/><rect x="39" y="100" width="1" height="2" fill="#d4d4d4"/><rect x="40" y="100" width="9" height="2" fill="#9cdcfe"/><rect x="49" y="100" width="1" height="2" fill="#d4d4d4"/><rect x="50" y="100" width="1" height="2" fill="#d4d4d4"/><rect x="4" y="102" width="1" height="2" fill="#d4d4d4"/><rect x="4" y="106" width="6" height="2" fill="#569cd6"/><rect x="11" y="106" width="4" height="2" fill="#569cd6"/><rect x="16" y="106" width="17" height="2" fill="#dcdcaa"/><rect x="33" y="106" width="1" height="2" fill="#d4d4d4"/><rect x="34" y="106" width="4" height="2" fill="#4ec9b0"/><rect x="39" y="106" width="2" height="2" fill="#9cdcfe"/><rect x="41" y="106" width="1" height="2" fill="#d4d4d4"/><rect x="43" y="106" width="1" height="2" fill="#d4d4d4"/><rect x="8" y="108" width="19" height="2" fill="#9cdcfe"/><rect x="27" y="108" width="1" height="2" fill="#d4d4d4"/><rect x="28" y="108" width="10" height="2" fill="#dcdcaa"/><rect x="38" y="108" width="1" height="2" fill="#d4d4d4"/><rect x="39" y="108" width="2" height="2" fill="#9cdcfe"/><rect x="41" y="108" width="1" height="2" fill="#d4d4d4"/><rect x="42" y="108" width="1" height="2" fill="#d4d4d4"/><rect x="4" y="110" width="1" height="2" fill="#d4d4d4"/><rect x="0" y="114" width="1" height="2" fill="#d4d4d4"/></g></svg><div class="a" style="left:1906px;top:118px;width:1px;height:892px;background:rgba(127,127,127,0.3);"></div><div class="a" style="left:1906px;top:118px;width:12px;height:1px;background:rgba(127,127,127,0.3);"></div><div class="a" style="left:1907px;top:448px;width:11px;height:2px;background:#a0a0a0;"></div><div class="a" style="left:0px;top:1010px;width:1918px;height:22px;background:#007acc;"></div><div class="a" style="left:0px;top:1032px;width:1918px;height:1px;background:#1e1e1e;"></div><div class="a" style="left:161px;top:1032px;width:47px;height:1px;background:#3c3c3c;"></div><svg class="a" style="left:13px;top:1013px;" width="16" height="16" viewBox="0 0 16 16"><circle cx="4.5" cy="3.5" r="1.7" fill="none" stroke="#ffffff" stroke-width="1.1"/><circle cx="4.5" cy="13" r="1.7" fill="none" stroke="#ffffff" stroke-width="1.1"/><circle cx="11.5" cy="5" r="1.7" fill="none" stroke="#ffffff" stroke-width="1.1"/><path d="M4.5 5.2v6.1M4.5 11c0-3 7-2 7-4.3" fill="none" stroke="#ffffff" stroke-width="1.1"/></svg><div class="a nw" style="left:32px;top:1012.04px;font-size:12px;line-height:18px;color:#ffffff;"><span style="letter-spacing:0.717px">master*</span></div><svg class="a" style="left:93px;top:1013px;" width="16" height="16" viewBox="0 0 16 16"><path d="M5.5 11.8H4.6a2.4 2.4 0 0 1-.2-4.8 3.4 3.4 0 0 1 6.6-.5 2.6 2.6 0 0 1 .6 5.3h-.9" fill="none" stroke="#ffffff" stroke-width="1"/><path d="M8 12.8V8.3M6.3 9.9L8 8.2l1.7 1.7" fill="none" stroke="#ffffff" stroke-width="1"/></svg><svg class="a" style="left:123px;top:1013px;" width="16" height="16" viewBox="0 0 16 16"><circle cx="8" cy="8" r="5.8" fill="none" stroke="#ffffff" stroke-width="1.1"/><path d="M5.7 5.7l4.6 4.6M10.3 5.7l-4.6 4.6" stroke="#ffffff" stroke-width="1.1"/></svg><div class="a nw" style="left:141px;top:1012.04px;font-size:12px;line-height:18px;color:#ffffff;"><span style="letter-spacing:0.188px">0</span></div><svg class="a" style="left:150px;top:1013px;" width="16" height="16" viewBox="0 0 16 16"><path d="M8 2.2L14.2 13.5H1.8z" fill="none" stroke="#ffffff" stroke-width="1.1" stroke-linejoin="round"/><path d="M8 6v4.2M8 11.2v1.3" stroke="#ffffff" stroke-width="1.1"/></svg><div class="a nw" style="left:168px;top:1012.04px;font-size:12px;line-height:18px;color:#ffffff;"><span style="letter-spacing:0.188px">31</span></div><svg class="a" style="left:184px;top:1013px;" width="16" height="16" viewBox="0 0 16 16"><circle cx="8" cy="8" r="5.8" fill="none" stroke="#ffffff" stroke-width="1.1"/><path d="M8 7v4.5M8 4.8v1.3" stroke="#ffffff" stroke-width="1.2"/></svg><div class="a nw" style="left:202px;top:1012.04px;font-size:12px;line-height:18px;color:#ffffff;"><span style="letter-spacing:0.188px">2</span></div><div class="a nw" style="left:1415px;top:1012.04px;font-size:12px;line-height:18px;color:#ffffff;"><span style="letter-spacing:0.024px">Ln 40, Col 13</span></div><div class="a nw" style="left:1503px;top:1012.04px;font-size:12px;line-height:18px;color:#ffffff;"><span style="letter-spacing:-0.099px">Tab Size: 4</span></div><div class="a nw" style="left:1577px;top:1012.04px;font-size:12px;line-height:18px;color:#ffffff;"><span style="letter-spacing:-0.322px">UTF-8</span></div><div class="a nw" style="left:1626px;top:1012.04px;font-size:12px;line-height:18px;color:#ffffff;"><span style="letter-spacing:-0.742px">LF</span></div><svg class="a" style="left:1652px;top:1013px;" width="16" height="16" viewBox="0 0 16 16"><path d="M5.8 3C4.6 3 4.2 3.6 4.2 4.7v1.9c0 .8-.4 1.4-1.5 1.4 1.1 0 1.5.6 1.5 1.4v1.9c0 1.1.4 1.7 1.6 1.7M10.2 3c1.2 0 1.6.6 1.6 1.7v1.9c0 .8.4 1.4 1.5 1.4-1.1 0-1.5.6-1.5 1.4v1.9c0 1.1-.4 1.7-1.6 1.7" fill="none" stroke="#ffffff" stroke-width="1"/></svg><div class="a nw" style="left:1672px;top:1012.04px;font-size:12px;line-height:18px;color:#ffffff;"><span style="letter-spacing:-0.625px">Java</span></div><svg class="a" style="left:1710px;top:1013px;" width="16" height="16" viewBox="0 0 16 16"><circle cx="8" cy="7" r="1.3" fill="#ffffff"/><path d="M5.6 9.5a3.4 3.4 0 1 1 4.8 0M3.8 11.3a6 6 0 1 1 8.4 0M8 8.5v6" fill="none" stroke="#ffffff" stroke-width="1.1"/></svg><div class="a nw" style="left:1728px;top:1012.04px;font-size:12px;line-height:18px;color:#ffffff;"><span style="letter-spacing:0.002px">Go Live</span></div><svg class="a" style="left:1784px;top:1013px;" width="16" height="16" viewBox="0 0 16 16"><circle cx="8" cy="8" r="5.8" fill="none" stroke="#ffffff" stroke-width="1.1"/><path d="M4 12L12 4" stroke="#ffffff" stroke-width="1.1"/></svg><div class="a nw" style="left:1803px;top:1012.04px;font-size:12px;line-height:18px;color:#ffffff;"><span style="letter-spacing:0.443px">Prettier</span></div><svg class="a" style="left:1861px;top:1013px;" width="16" height="16" viewBox="0 0 16 16"><circle cx="5.5" cy="6" r="2.3" fill="none" stroke="#ffffff" stroke-width="1.1"/><path d="M1.5 14c0-2.7 1.7-4.5 4-4.5s4 1.8 4 4.5M8.5 2.5h6v5h-2l-2 2v-2" fill="none" stroke="#ffffff" stroke-width="1.1"/></svg><svg class="a" style="left:1890px;top:1013px;" width="16" height="16" viewBox="0 0 16 16"><path d="M8 2a4 4 0 0 1 4 4v3.5l1.5 2.5h-11L4 9.5V6a4 4 0 0 1 4-4zM6.5 13.5a1.5 1.5 0 0 0 3 0" fill="none" stroke="#ffffff" stroke-width="1.1"/></svg></body></html>
